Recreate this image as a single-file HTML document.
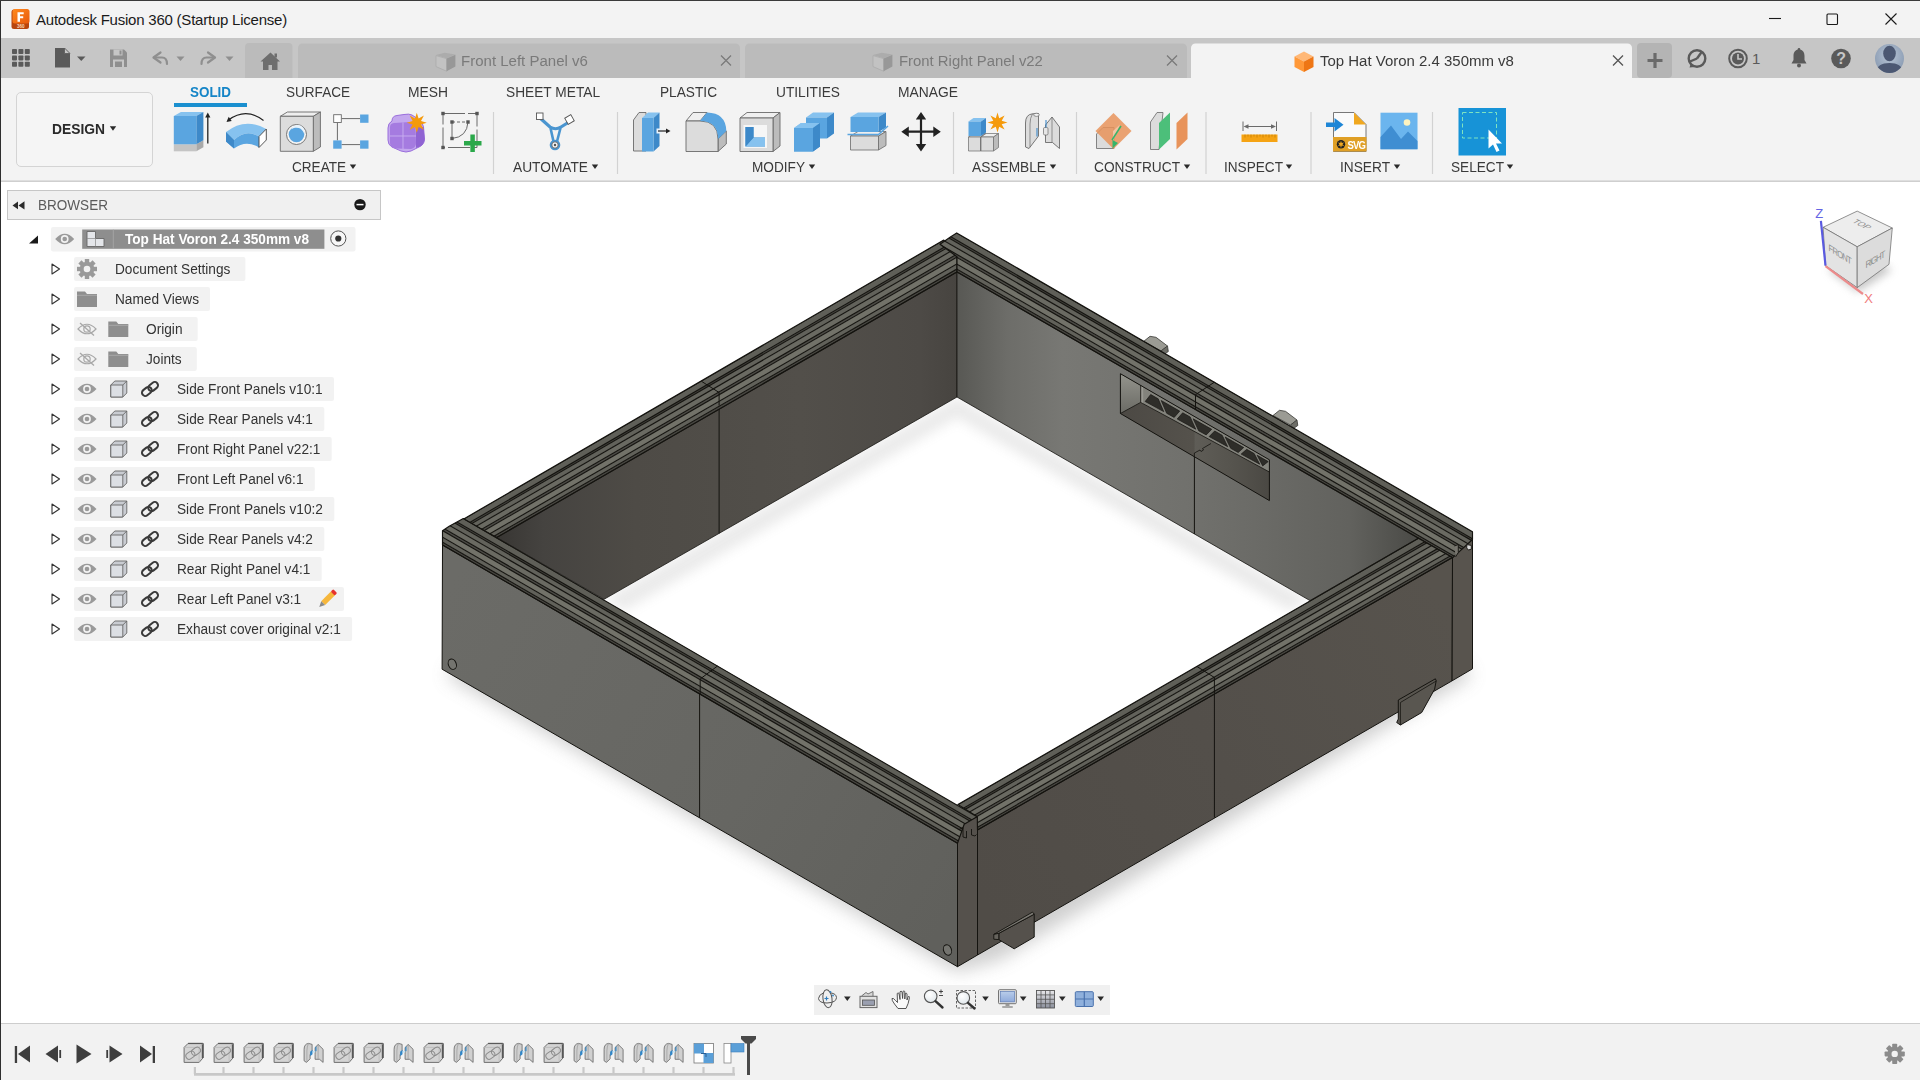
<!DOCTYPE html>
<html lang="en"><head><meta charset="utf-8"><title>Autodesk Fusion 360</title>
<style>
html,body{margin:0;padding:0;}
body{width:1920px;height:1080px;overflow:hidden;background:#fff;position:relative;
 font-family:"Liberation Sans",sans-serif;}
.a{position:absolute;}
.t{position:absolute;white-space:nowrap;font-family:"Liberation Sans",sans-serif;}
svg{position:absolute;overflow:visible;}
</style></head><body>
<div class="a" style="left:0;top:0;width:1920px;height:38px;background:#f3f3f3"></div>
<svg style="left:11px;top:9px" width="19" height="21" viewBox="0 0 19 21">
<defs><linearGradient id="fg" x1="0" y1="0" x2="1" y2="1"><stop offset="0" stop-color="#ff8a1f"/><stop offset="1" stop-color="#e8590c"/></linearGradient></defs>
<rect x="0.5" y="0.5" width="17.5" height="19.5" rx="2.5" fill="#b8450e"/>
<rect x="1.5" y="0" width="17" height="14.5" rx="2.5" fill="url(#fg)"/>
<path d="M6.5 3.2h6.2v2.1H9v2h3.2v2H9v3.4H6.5z" fill="#fff"/>
<text x="9.8" y="18.6" font-size="4.5" font-weight="bold" fill="#ffd9b8" text-anchor="middle" font-family="Liberation Sans, sans-serif">360</text>
</svg>
<span class="t" style="left:36px;top:9.0px;font-size:15.00px;line-height:21px;color:#1a1a1a;letter-spacing:-0.225px;">Autodesk Fusion 360 (Startup License)</span>
<svg style="left:1760px;top:8px" width="150" height="24" viewBox="1760 8 150 24">
<path d="M1769 18.5h12" stroke="#1a1a1a" stroke-width="1.1" fill="none"/>
<rect x="1827" y="14" width="10.5" height="10.5" rx="1" stroke="#1a1a1a" stroke-width="1.1" fill="none"/>
<path d="M1885.5 13.5l11 11M1896.5 13.5l-11 11" stroke="#1a1a1a" stroke-width="1.1" fill="none"/>
</svg>
<div class="a" style="left:0;top:38px;width:1920px;height:40px;background:#c6c6c6"></div>
<svg style="left:0;top:38px" width="300" height="40" viewBox="0 38 300 40"><rect x="12.0" y="49.0" width="5" height="5" rx="0.8" fill="#5a5a5a"/><rect x="18.4" y="49.0" width="5" height="5" rx="0.8" fill="#5a5a5a"/><rect x="24.8" y="49.0" width="5" height="5" rx="0.8" fill="#5a5a5a"/><rect x="12.0" y="55.4" width="5" height="5" rx="0.8" fill="#5a5a5a"/><rect x="18.4" y="55.4" width="5" height="5" rx="0.8" fill="#5a5a5a"/><rect x="24.8" y="55.4" width="5" height="5" rx="0.8" fill="#5a5a5a"/><rect x="12.0" y="61.8" width="5" height="5" rx="0.8" fill="#5a5a5a"/><rect x="18.4" y="61.8" width="5" height="5" rx="0.8" fill="#5a5a5a"/><rect x="24.8" y="61.8" width="5" height="5" rx="0.8" fill="#5a5a5a"/><path d="M55 48h9.5l5.5 5.5V67.5H55z" fill="#5a5a5a"/><path d="M64.5 48v5.5H70z" fill="#c6c6c6" stroke="#5a5a5a" stroke-width="0.8"/>
<path d="M77 56.5h8.5l-4.25 4.5z" fill="#5a5a5a"/>
<path d="M110 49.5h14l3 3V67h-17z" fill="#8f8f8f"/><rect x="113.5" y="49.5" width="9" height="6" fill="#c6c6c6"/><rect x="119.5" y="50.5" width="2" height="4" fill="#8f8f8f"/><rect x="113" y="59.5" width="11" height="7.5" fill="#c6c6c6"/><rect x="115" y="61.5" width="7" height="5.5" fill="#8f8f8f"/>
<path d="M160.500 52.500L153.500 57.500L160.500 62.500" fill="none" stroke="#8f8f8f" stroke-width="2.2" stroke-linejoin="round" stroke-linecap="round"/><path d="M154.500 57.500H162Q167 57.500 167 64" fill="none" stroke="#8f8f8f" stroke-width="2.2" stroke-linecap="round"/>
<path d="M176.500 56.500h8l-4 4.500z" fill="#8f8f8f"/>
<path d="M208 52.500L215 57.500L208 62.500" fill="none" stroke="#8f8f8f" stroke-width="2.2" stroke-linejoin="round" stroke-linecap="round"/><path d="M214 57.500H206.500Q201.500 57.500 201.500 64" fill="none" stroke="#8f8f8f" stroke-width="2.2" stroke-linecap="round"/>
<path d="M225.500 56.500h8l-4 4.500z" fill="#8f8f8f"/>
<path d="M245 78V47a4 4 0 0 1 4-4h39.500a4 4 0 0 1 4 4V78z" fill="#bbbbbb"/>
<path d="M270.500 52.500L280 61.500h-2.500V70h-5.500v-5h-3.500v5H263V61.500h-2.500z" fill="#6e6e6e"/><rect x="274.500" y="53.500" width="2.500" height="4" fill="#6e6e6e"/>
</svg>
<svg style="left:0;top:38px" width="1920" height="40" viewBox="0 38 1920 40"><path d="M298 78V48a4.500 4.500 0 0 1 4.500-4.500H735.5a4.500 4.500 0 0 1 4.500 4.500V78z" fill="#bbbbbb"/><path d="M745 78V48a4.500 4.500 0 0 1 4.500-4.500H1182.5a4.500 4.500 0 0 1 4.500 4.500V78z" fill="#bbbbbb"/><path d="M1191 78V48a4.500 4.500 0 0 1 4.500-4.500H1627.5a4.500 4.500 0 0 1 4.500 4.500V78z" fill="#f3f3f3"/><path d="M436 55L444.8 52.7L455.4 54.5L446.6 58.3z" fill="#acacac"/><path d="M436 55.6L446.6 58.6V71.2L436 66.6z" fill="#c2c2c2" stroke="#a4a4a4" stroke-width="0.600"/><path d="M455.4 54.8L446.6 58.6V71.2L455.4 66.6z" fill="#989898"/><path d="M721 55.5l10 10M731 55.5l-10 10" stroke="#7a7a7a" stroke-width="1.3" fill="none"/><path d="M873 55L881.8 52.7L892.4 54.5L883.6 58.3z" fill="#acacac"/><path d="M873 55.6L883.6 58.6V71.2L873 66.6z" fill="#c2c2c2" stroke="#a4a4a4" stroke-width="0.600"/><path d="M892.4 54.8L883.6 58.6V71.2L892.4 66.6z" fill="#989898"/><path d="M1167 55.5l10 10M1177 55.5l-10 10" stroke="#7a7a7a" stroke-width="1.3" fill="none"/><path d="M1294.5 56.5L1304.0 51.5L1313.5 56.5L1304.0 61.5z" fill="#ffb877"/><path d="M1294.5 56.5L1304.0 61.5V72.0L1294.5 67.0z" fill="#ff9838"/><path d="M1313.5 56.5L1304.0 61.5V72.0L1313.5 67.0z" fill="#ee7615"/><path d="M1613 55.5l10 10M1623 55.5l-10 10" stroke="#555" stroke-width="1.3" fill="none"/><rect x="1637" y="43" width="35" height="35" rx="4" fill="#b4b4b4"/><path d="M1655 53v15M1647.500 60.500h15" stroke="#6a6a6a" stroke-width="3.2" fill="none"/><circle cx="1697" cy="58.500" r="8.300" fill="none" stroke="#5a5a5a" stroke-width="2.400"/><path d="M1697 58.500L1702 51.500M1697 58.500l-7 3" stroke="#5a5a5a" stroke-width="2.400" fill="none"/><path d="M1691 63l-1.500 4.500 5.500-0.500z" fill="#5a5a5a"/><circle cx="1738" cy="58.500" r="8.800" fill="none" stroke="#5a5a5a" stroke-width="2"/><circle cx="1738" cy="58.500" r="6" fill="#5a5a5a"/><path d="M1738 54v5h4" stroke="#c6c6c6" stroke-width="1.600" fill="none"/><path d="M1799 49.500c-4 0-5.500 3.200-5.500 6.500v4l-2 3.500h15l-2-3.500v-4c0-3.300-1.500-6.500-5.500-6.500z" fill="#5a5a5a"/><circle cx="1799" cy="65.500" r="2" fill="#5a5a5a"/><circle cx="1799" cy="49.200" r="1.300" fill="#5a5a5a"/><circle cx="1841" cy="58.500" r="9.800" fill="#5a5a5a"/><defs><radialGradient id="av" cx="0.5" cy="0.4" r="0.6"><stop offset="0" stop-color="#b9c6d6"/><stop offset="1" stop-color="#8a9bb2"/></radialGradient><clipPath id="avc"><circle cx="1889.500" cy="58.500" r="14.500"/></clipPath></defs><circle cx="1889.500" cy="58.500" r="14.500" fill="url(#av)"/><g clip-path="url(#avc)"><ellipse cx="1889.500" cy="53.500" rx="6.300" ry="7.800" fill="#4c5872"/><path d="M1875 76c0-9.500 6-13 14.500-13s14.500 3.500 14.500 13z" fill="#4c5872"/></g></svg>
<span class="t" style="left:461px;top:50.0px;font-size:15.45px;line-height:22px;color:#7a7a7a;transform:scaleX(0.9729);transform-origin:0 50%;">Front Left Panel v6</span>
<span class="t" style="left:899px;top:50.0px;font-size:15.45px;line-height:22px;color:#7a7a7a;transform:scaleX(0.9637);transform-origin:0 50%;">Front Right Panel v22</span>
<span class="t" style="left:1320px;top:50.0px;font-size:15.45px;line-height:22px;color:#3a3a3a;transform:scaleX(0.9696);transform-origin:0 50%;">Top Hat Voron 2.4 350mm v8</span>
<span class="t" style="left:1752px;top:47.5px;font-size:15.00px;line-height:21px;color:#5a5a5a;">1</span>
<span class="t" style="left:1836.2px;top:47.5px;font-size:16.00px;line-height:22px;color:#c6c6c6;font-weight:bold;">?</span>
<div class="a" style="left:0;top:0;width:1920px;height:1px;background:#3a3a3a"></div>
<div class="a" style="left:0;top:78px;width:1920px;height:104px;background:#f3f3f3"></div>
<div class="a" style="left:0;top:180px;width:1920px;height:2px;background:#dedede"></div>
<div class="a" style="left:0;top:181px;width:1920px;height:1px;background:#cfcfcf"></div>
<div class="a" style="left:16px;top:92px;width:135px;height:73px;border:1px solid #d4d4d4;border-radius:5px;background:#f5f5f5"></div>
<span class="t" style="left:52px;top:118.5px;font-size:14.58px;line-height:20px;color:#2a2a2a;font-weight:bold;transform:scaleX(0.9482);transform-origin:0 50%;">DESIGN</span>
<span class="t" style="left:190px;top:82.0px;font-size:14.58px;line-height:20px;color:#1585c7;font-weight:bold;transform:scaleX(0.9203);transform-origin:0 50%;">SOLID</span>
<div class="a" style="left:174px;top:103px;width:73px;height:4px;background:#1a8fcf"></div>
<span class="t" style="left:286px;top:81.5px;font-size:14.72px;line-height:21px;color:#3a3a3a;transform:scaleX(0.9209);transform-origin:0 50%;">SURFACE</span>
<span class="t" style="left:408px;top:81.5px;font-size:14.72px;line-height:21px;color:#3a3a3a;transform:scaleX(0.9409);transform-origin:0 50%;">MESH</span>
<span class="t" style="left:506px;top:81.5px;font-size:14.72px;line-height:21px;color:#3a3a3a;transform:scaleX(0.9321);transform-origin:0 50%;">SHEET METAL</span>
<span class="t" style="left:660px;top:81.5px;font-size:14.72px;line-height:21px;color:#3a3a3a;transform:scaleX(0.9294);transform-origin:0 50%;">PLASTIC</span>
<span class="t" style="left:776px;top:81.5px;font-size:14.72px;line-height:21px;color:#3a3a3a;transform:scaleX(0.9318);transform-origin:0 50%;">UTILITIES</span>
<span class="t" style="left:898px;top:81.5px;font-size:14.72px;line-height:21px;color:#3a3a3a;transform:scaleX(0.9408);transform-origin:0 50%;">MANAGE</span>
<span class="t" style="left:292px;top:156.5px;font-size:14.72px;line-height:21px;color:#3a3a3a;transform:scaleX(0.9216);transform-origin:0 50%;">CREATE</span>
<span class="t" style="left:513px;top:156.5px;font-size:14.72px;line-height:21px;color:#3a3a3a;transform:scaleX(0.9329);transform-origin:0 50%;">AUTOMATE</span>
<span class="t" style="left:752px;top:156.5px;font-size:14.72px;line-height:21px;color:#3a3a3a;transform:scaleX(0.9262);transform-origin:0 50%;">MODIFY</span>
<span class="t" style="left:972px;top:156.5px;font-size:14.72px;line-height:21px;color:#3a3a3a;transform:scaleX(0.9328);transform-origin:0 50%;">ASSEMBLE</span>
<span class="t" style="left:1094px;top:156.5px;font-size:14.72px;line-height:21px;color:#3a3a3a;transform:scaleX(0.9310);transform-origin:0 50%;">CONSTRUCT</span>
<span class="t" style="left:1224px;top:156.5px;font-size:14.72px;line-height:21px;color:#3a3a3a;transform:scaleX(0.9251);transform-origin:0 50%;">INSPECT</span>
<span class="t" style="left:1340px;top:156.5px;font-size:14.72px;line-height:21px;color:#3a3a3a;transform:scaleX(0.9312);transform-origin:0 50%;">INSERT</span>
<span class="t" style="left:1451px;top:156.5px;font-size:14.72px;line-height:21px;color:#3a3a3a;transform:scaleX(0.9259);transform-origin:0 50%;">SELECT</span>
<svg style="left:0;top:78px" width="1920" height="104" viewBox="0 78 1920 104"><path d="M349.8 164.500h6.400l-3.200 4.500z" fill="#2a2a2a"/><path d="M591.8 164.500h6.400l-3.200 4.500z" fill="#2a2a2a"/><path d="M808.8 164.500h6.400l-3.200 4.500z" fill="#2a2a2a"/><path d="M1049.8 164.500h6.400l-3.200 4.500z" fill="#2a2a2a"/><path d="M1183.8 164.500h6.400l-3.200 4.500z" fill="#2a2a2a"/><path d="M1285.8 164.500h6.400l-3.200 4.500z" fill="#2a2a2a"/><path d="M1393.8 164.500h6.400l-3.200 4.500z" fill="#2a2a2a"/><path d="M1506.8 164.500h6.400l-3.200 4.500z" fill="#2a2a2a"/><path d="M109.800 126.300h6.400l-3.200 4.500z" fill="#2a2a2a"/><path d="M493.5 112V174" stroke="#d2d2d2" stroke-width="1.2"/><path d="M617.5 112V174" stroke="#d2d2d2" stroke-width="1.2"/><path d="M953.5 112V174" stroke="#d2d2d2" stroke-width="1.2"/><path d="M1076.5 112V174" stroke="#d2d2d2" stroke-width="1.2"/><path d="M1206 112V174" stroke="#d2d2d2" stroke-width="1.2"/><path d="M1311 112V174" stroke="#d2d2d2" stroke-width="1.2"/><path d="M1432.5 112V174" stroke="#d2d2d2" stroke-width="1.2"/><polygon points="173.8,144.3 180.9,140.3 203.4,140.3 196.3,144.3" fill="#ddd"/><polygon points="196.3,144.3 203.4,140.3 203.4,147.3 196.3,151.3" fill="#a9a9a9"/><rect x="173.8" y="144.3" width="22.5" height="7" fill="#c4c4c4"/><polygon points="173.8,116 180.9,112 203.4,112 196.3,116" fill="#86c2ef"/><polygon points="196.3,116 203.4,112 203.4,140.3 196.3,144.3" fill="#3d89c9"/><rect x="173.8" y="116" width="22.5" height="28.3" fill="#5aa5e0"/><path d="M207.800 143.500V116" stroke="#222" stroke-width="1.3"/><path d="M207.800 112.500l2.600 5h-5.200z" fill="#222"/><path d="M226 132Q245 117 266.300 129L259 136.500Q246 128.500 234 140Z" fill="#86c2ef"/><path d="M226 132L234 140Q246 128.500 259 136.500V147.500Q246 139.500 234 148.500L226 141.500Z" fill="#5aa5e0"/><path d="M226 132L234 140V148.500L226 141.500Z" fill="#3d89c9"/><path d="M259 136.500L266.300 129V140L259 147.500Z" fill="#fff" stroke="#444" stroke-width="0.9" stroke-linejoin="round"/><path d="M263.500 120.500Q246 107 228.500 120" fill="none" stroke="#222" stroke-width="1.1"/><path d="M226.500 122l2.200-5.200 3 4.300z" fill="#222"/><polygon points="280.3,116.3 287.40000000000003,112.0 320.40000000000003,112.0 313.3,116.3" fill="#efefef" stroke="#6a6a6a" stroke-width="0.9" stroke-linejoin="round"/><polygon points="313.3,116.3 320.40000000000003,112.0 320.40000000000003,147.0 313.3,151.3" fill="#bcbcbc" stroke="#6a6a6a" stroke-width="0.9" stroke-linejoin="round"/><rect x="280.3" y="116.3" width="33" height="35" fill="#dcdcdc" stroke="#6a6a6a" stroke-width="0.9" stroke-linejoin="round"/><circle cx="296.500" cy="134.500" r="10" fill="#f4f4f4" stroke="#6a6a6a" stroke-width="0.9"/><circle cx="296.500" cy="134.500" r="7.800" fill="#5aa5e0"/><path d="M291.500 129.500A7.800 7.800 0 0 1 304 133.500A6.500 6.500 0 0 0 291.500 129.500Z" fill="#e8f3fc"/><path d="M341.500 118.600H360M337.400 122.700V140.400M341.500 144.600H360" stroke="#6a6a6a" stroke-width="1" fill="none"/><rect x="333.700" y="114.700" width="7.600" height="7.800" fill="#fff" stroke="#6a6a6a" stroke-width="0.9"/><rect x="360.100" y="114.500" width="8.400" height="8.300" fill="#5aa5e0"/><rect x="333.200" y="140.400" width="8.400" height="8.300" fill="#5aa5e0"/><rect x="360.100" y="140.400" width="8.400" height="8.300" fill="#5aa5e0"/><path d="M392 121Q392 116 397 115.500L404 114.500Q409 113.500 412 115L418 119Q423 122 423.500 127L424.500 139Q424.500 144 420 146.500L411 151Q406 153 401 151L392 147Q388 145 388 140L388 128Q388 123 392 121Z" fill="#c4a8ee" stroke="#9a6fdc" stroke-width="1"/><path d="M390 127Q390 123.500 394 123L410 122Q415 122 415.500 127L416 143Q416 148 411 149L396 148.500Q390 148 390 143Z" fill="#a57be0"/><path d="M390 136H416M403 122.500V149" stroke="#c9b0f0" stroke-width="0.9"/><path d="M416 127L423.500 127L424.500 139Q424.500 144 420 146.500L416 148Z" fill="#8f63d2"/><polygon points="416.8,112.7 418.6,118.5 423.9,115.6 421.0,120.9 426.8,122.7 421.0,124.5 423.9,129.8 418.6,126.9 416.8,132.7 415.0,126.9 409.7,129.8 412.6,124.5 406.8,122.7 412.6,120.9 409.7,115.6 415.0,118.5" fill="#f59a0c"/><rect x="443" y="113.500" width="34" height="34" fill="none" stroke="#6a6a6a" stroke-width="1" stroke-dasharray="22 3"/><path d="M452 122H468" stroke="#6a6a6a" stroke-width="1" stroke-dasharray="3 2" fill="none"/><path d="M452 122V138.500" stroke="#6a6a6a" stroke-width="1" fill="none"/><path d="M468 122Q467 137 452 138.500" stroke="#6a6a6a" stroke-width="1" fill="none"/><rect x="441.3" y="111.8" width="3.400" height="3.400" fill="#555"/><rect x="475.3" y="111.8" width="3.400" height="3.400" fill="#555"/><rect x="441.3" y="145.8" width="3.400" height="3.400" fill="#555"/><rect x="450.3" y="120.3" width="3.400" height="3.400" fill="#555"/><rect x="466.3" y="120.3" width="3.400" height="3.400" fill="#555"/><rect x="450.3" y="136.8" width="3.400" height="3.400" fill="#555"/><path d="M472.600 134.500V152M464 143.200H481.500" stroke="#2ba84a" stroke-width="4.500" fill="none"/><path d="M540 118L550 127Q555.500 130.500 561 127L569 122" fill="none" stroke="#4a95d0" stroke-width="3.200"/><path d="M550.500 128L553.500 141.500M560.500 128L557 141.500" fill="none" stroke="#4a95d0" stroke-width="2.600"/><circle cx="555" cy="145" r="5.300" fill="#4a95d0"/><circle cx="555" cy="145" r="3.200" fill="#f3f3f3" stroke="#555" stroke-width="0.8"/><circle cx="555" cy="145" r="1.200" fill="#555"/><rect x="536.500" y="113" width="6.500" height="6.500" fill="#fff" stroke="#555" stroke-width="0.9"/><rect x="566" y="116" width="7" height="7" fill="#fff" stroke="#555" stroke-width="0.9" transform="rotate(-30 569.5 119.5)"/><path d="M633.500 120L639 112.500H646V151H633.500Z" fill="#dcdcdc" stroke="#6a6a6a" stroke-width="0.9" stroke-linejoin="round"/><polygon points="642,118 648,112.5 659.5,112.5 653.5,118" fill="#86c2ef"/><polygon points="653.5,118 659.5,112.5 659.5,146.0 653.5,151.5" fill="#3d89c9"/><rect x="642" y="118" width="11.5" height="33.5" fill="#5aa5e0"/><rect x="656.500" y="128.500" width="5" height="5" fill="#eaf3fb"/><path d="M658 131H668" stroke="#222" stroke-width="1.2"/><path d="M670.500 131l-4.500-2.500v5z" fill="#222"/><path d="M686 121L693 112.500H707L700 121Z" fill="#efefef" stroke="#6a6a6a" stroke-width="0.9" stroke-linejoin="round"/><path d="M718 139L726.300 131V144L718 151.500Z" fill="#bcbcbc" stroke="#6a6a6a" stroke-width="0.9" stroke-linejoin="round"/><path d="M686 121H700Q718 121 718 139V151.500H686Z" fill="#dcdcdc" stroke="#6a6a6a" stroke-width="0.9" stroke-linejoin="round"/><path d="M700 121L707 112.500Q726 113 726.300 131L718 139Q718 121 700 121Z" fill="#5aa5e0"/><polygon points="740,118 747,112.5 780,112.5 773,118" fill="#efefef" stroke="#6a6a6a" stroke-width="0.9" stroke-linejoin="round"/><polygon points="773,118 780,112.5 780,146.0 773,151.5" fill="#bcbcbc" stroke="#6a6a6a" stroke-width="0.9" stroke-linejoin="round"/><rect x="740" y="118" width="33" height="33.5" fill="#dcdcdc" stroke="#6a6a6a" stroke-width="0.9" stroke-linejoin="round"/><rect x="743.500" y="125" width="23.500" height="23" fill="#f6f6f6"/><path d="M745.500 127H753.500V137.500H765V146.500H745.500Z" fill="#3d89c9"/><path d="M753.500 137.500H765V146.500H745.500Z" fill="#86c2ef"/><path d="M745.500 127H753.500V137.500L745.500 146.500Z" fill="#3d89c9"/><polygon points="794,128 801,123 820,123 813,128" fill="#86c2ef"/><polygon points="813,128 820,123 820,146.5 813,151.5" fill="#3d89c9"/><rect x="794" y="128" width="19" height="23.5" fill="#5aa5e0"/><polygon points="806,117.5 813,112.5 834,112.5 827,117.5" fill="#86c2ef"/><polygon points="827,117.5 834,112.5 834,133.5 827,138.5" fill="#3d89c9"/><rect x="806" y="117.5" width="21" height="21" fill="#5aa5e0"/><polygon points="794,128 801,123 820,123 813,128" fill="#86c2ef"/><polygon points="813,128 820,123 820,146.5 813,151.5" fill="#3d89c9"/><rect x="794" y="128" width="19" height="23.5" fill="#5aa5e0"/><polygon points="850.5,136 858.0,131.5 886.0,131.5 878.5,136" fill="#efefef" stroke="#6a6a6a" stroke-width="0.8" stroke-linejoin="round"/><polygon points="878.5,136 886.0,131.5 886.0,145.5 878.5,150" fill="#bcbcbc" stroke="#6a6a6a" stroke-width="0.8" stroke-linejoin="round"/><rect x="850.5" y="136" width="28" height="14" fill="#dcdcdc" stroke="#6a6a6a" stroke-width="0.8" stroke-linejoin="round"/><polygon points="850.5,117 858.0,112.5 886.0,112.5 878.5,117" fill="#86c2ef"/><polygon points="878.5,117 886.0,112.5 886.0,127.5 878.5,132" fill="#3d89c9"/><rect x="850.5" y="117" width="28" height="15" fill="#5aa5e0"/><path d="M847.500 134.500H878.500L888 126" fill="none" stroke="#5aa5e0" stroke-width="1.600"/><path d="M921 116V147.500M905.500 131.700H936.500" stroke="#222" stroke-width="2.200" fill="none"/><path d="M921 112l5.200 7.500h-10.400zM921 151.500l5.200-7.500h-10.400zM901.300 131.700l7.500-5.200v10.400zM940.800 131.700l-7.500-5.200v10.400z" fill="#222"/><polygon points="968.5,137 973.5,133.5 985.5,133.5 980.5,137" fill="#efefef" stroke="#6a6a6a" stroke-width="0.7" stroke-linejoin="round"/><polygon points="980.5,137 985.5,133.5 985.5,147.5 980.5,151" fill="#bcbcbc" stroke="#6a6a6a" stroke-width="0.7" stroke-linejoin="round"/><rect x="968.5" y="137" width="12" height="14" fill="#dcdcdc" stroke="#6a6a6a" stroke-width="0.7" stroke-linejoin="round"/><polygon points="981,137 986,133.5 998.5,133.5 993.5,137" fill="#efefef" stroke="#6a6a6a" stroke-width="0.7" stroke-linejoin="round"/><polygon points="993.5,137 998.5,133.5 998.5,147.5 993.5,151" fill="#bcbcbc" stroke="#6a6a6a" stroke-width="0.7" stroke-linejoin="round"/><rect x="981" y="137" width="12.5" height="14" fill="#dcdcdc" stroke="#6a6a6a" stroke-width="0.7" stroke-linejoin="round"/><polygon points="968.5,121.5 973.5,118.0 986.0,118.0 981.0,121.5" fill="#86c2ef"/><polygon points="981.0,121.5 986.0,118.0 986.0,132.5 981.0,136.0" fill="#3d89c9"/><rect x="968.5" y="121.5" width="12.5" height="14.5" fill="#5aa5e0"/><polygon points="997.5,112.5 999.2,118.3 1004.6,115.4 1001.7,120.8 1007.5,122.5 1001.7,124.2 1004.6,129.6 999.2,126.7 997.5,132.5 995.8,126.7 990.4,129.6 993.3,124.2 987.5,122.5 993.3,120.8 990.4,115.4 995.8,118.3" fill="#f59a0c"/><path d="M1025.500 147V123Q1025.500 114.500 1032.500 113.800L1038.500 113.500V136L1029 148.500Z" fill="#dcdcdc" stroke="#6a6a6a" stroke-width="0.9" stroke-linejoin="round"/><path d="M1032.500 113.800Q1030 118 1030 124V147" fill="none" stroke="#6a6a6a" stroke-width="0.7"/><path d="M1045.500 142.500V125L1052 117L1059.500 127V148.500L1052.500 142.500Z" fill="#dcdcdc" stroke="#6a6a6a" stroke-width="0.9" stroke-linejoin="round"/><path d="M1052 117V142.500" stroke="#6a6a6a" stroke-width="0.7"/><rect x="1043.500" y="127.500" width="4.500" height="7.500" rx="1.200" fill="#e6e6e6" stroke="#6a6a6a" stroke-width="0.7"/><ellipse cx="1036.500" cy="114.800" rx="2.800" ry="1.600" fill="#f2f2f2" stroke="#6a6a6a" stroke-width="0.7"/><path d="M1037 128V136.500M1046 120V127.500" stroke="#3d89c9" stroke-width="1.100"/><path d="M1096.500 134L1103 127.500H1114V148.500H1096.500Z" fill="#dcdcdc" stroke="#6a6a6a" stroke-width="0.8" stroke-linejoin="round"/><path d="M1113.500 113L1131.500 131L1113.500 149L1095.500 131Z" fill="#e8935a" fill-opacity="0.85"/><path d="M1113 141L1120 124.500L1113 131Z" fill="#f2c3a2"/><path d="M1112.500 140V148.500L1118 143Z" fill="#35b56a"/><path d="M1112 140L1121 126" stroke="#35b56a" stroke-width="1.500"/><path d="M1150.500 122L1157 112.500H1163L1159 149.500H1150.500Z" fill="#dcdcdc" stroke="#6a6a6a" stroke-width="0.8" stroke-linejoin="round"/><path d="M1159 123L1170 112.500V139L1159 149.500Z" fill="#4cbf7a"/><path d="M1176.500 123L1187.500 112.500V139L1176.500 149.500Z" fill="#e8935a"/><path d="M1243 121.500V131M1276.500 121.500V131M1245 126.500H1274.500" stroke="#6a6a6a" stroke-width="1" fill="none"/><path d="M1243.500 126.500l5-2.300v4.600zM1276 126.500l-5-2.300v4.600z" fill="#6a6a6a"/><rect x="1241.500" y="134.500" width="36" height="7.500" fill="#f5a313"/><path d="M1245 134.500v3M1248 134.500v2M1251 134.500v3M1254 134.500v2M1257 134.500v3M1260 134.500v2M1263 134.500v3M1266 134.500v2M1269 134.500v3M1272 134.500v2M1275 134.500v3" stroke="#c27a00" stroke-width="0.7"/><path d="M1333.500 112.500H1354L1366 124.500V151.500H1333.500Z" fill="#fafafa" stroke="#6a6a6a" stroke-width="0.9"/><path d="M1354 112.500L1366 124.500H1354Z" fill="#f0a820"/><rect x="1333" y="137" width="33.500" height="14.500" fill="#e0a026"/><circle cx="1341" cy="144.300" r="4.200" fill="#222"/><polygon points="1341.0,140.7 1341.8,143.0 1344.1,142.5 1342.5,144.3 1344.1,146.1 1341.8,145.6 1341.0,147.9 1340.2,145.6 1337.9,146.1 1339.5,144.3 1337.9,142.5 1340.2,143.0" fill="#f0a820"/><rect x="1326" y="122.500" width="10" height="4.500" fill="#1e86d6"/><path d="M1334.500 118l9 6.700-9 6.700z" fill="#1e86d6"/><rect x="1380.500" y="112.700" width="37" height="36.500" fill="#6bb5ee"/><path d="M1380.500 149.200V137L1391 125.500L1401 139L1408 131.500L1417.500 141V149.200Z" fill="#3f8ed2"/><circle cx="1407" cy="122.500" r="3.300" fill="#fdf3c0"/><rect x="1458.500" y="108" width="47.500" height="47.500" fill="#1793d7"/><rect x="1462.500" y="112.500" width="34" height="25.500" fill="none" stroke="#7fe3c0" stroke-width="1" stroke-dasharray="4 2.500"/><path d="M1488.500 129.500V148.500L1493 144.500L1496.500 152L1499.500 150.500L1496 143.500H1502Z" fill="#fff"/></svg>
<span class="t" style="left:1347.5px;top:138.0px;font-size:9.50px;line-height:13px;color:#fff;font-weight:bold;letter-spacing:-0.854px;transform:scaleY(1.15);">SVG</span>
<div class="a" style="left:0;top:1px;width:1px;height:1079px;background:#2e2e2e;z-index:5"></div>
<div class="a" style="left:6.500px;top:189.500px;width:372px;height:28px;background:#f0f0f0;border:1px solid #c6c6c6;box-sizing:content-box"></div>
<span class="t" style="left:37.5px;top:194.5px;font-size:14.45px;line-height:20px;color:#5a5a5a;transform:scaleX(0.9378);transform-origin:0 50%;">BROWSER</span>
<svg style="left:0;top:182px" width="400" height="470" viewBox="0 182 400 470"><path d="M12.500 205.400l5.500-3.800v7.600zM18.500 205.400l6-4.200v8.400z" fill="#2a2a2a"/><circle cx="360" cy="204.600" r="5.700" fill="#1a1a1a"/><path d="M356.500 204.600h7" stroke="#fff" stroke-width="1.500"/><rect x="51" y="227" width="304.500" height="24.500" rx="2" fill="#f2f2f2"/><path d="M38 235.500V243.500H29Z" fill="#1a1a1a"/><path d="M55.2 239Q64.7 228.5 74.2 239Q64.7 249.5 55.2 239Z" fill="#9a9a9a"/><circle cx="64.7" cy="239" r="3.900" fill="#f2f2f2"/><circle cx="64.7" cy="239" r="2.300" fill="#9a9a9a"/><rect x="82.200" y="229.500" width="242.200" height="19.300" fill="#8e8e8e"/><path d="M113.300 229.500V248.800" stroke="#a8a8a8" stroke-width="0.800"/><path d="M87 231.500H95.500V238.500H104V246.500H87Z" fill="#e4e6ea" stroke="#666" stroke-width="0.900" stroke-linejoin="round"/><path d="M95.500 238.500V246.500M87 238.500H95.500" stroke="#888" stroke-width="0.700"/><circle cx="338.300" cy="238.500" r="7.600" fill="#f7f7f7" stroke="#555" stroke-width="1"/><circle cx="338.300" cy="238.500" r="3.100" fill="#333"/><rect x="74" y="257" width="171.4" height="24" rx="2" fill="#f2f2f2"/><path d="M52 264L59.5 269L52 274Z" fill="#fff" stroke="#333" stroke-width="1.100" stroke-linejoin="round"/><rect x="84.8" y="259" width="4.400" height="20" fill="#9a9a9a" transform="rotate(0 87 269)"/><rect x="84.8" y="259" width="4.400" height="20" fill="#9a9a9a" transform="rotate(45 87 269)"/><rect x="84.8" y="259" width="4.400" height="20" fill="#9a9a9a" transform="rotate(90 87 269)"/><rect x="84.8" y="259" width="4.400" height="20" fill="#9a9a9a" transform="rotate(135 87 269)"/><circle cx="87" cy="269" r="7.300" fill="#9a9a9a"/><circle cx="87" cy="269" r="3.300" fill="#f2f2f2"/><rect x="74" y="287" width="136.0" height="24" rx="2" fill="#f2f2f2"/><path d="M52 294L59.5 299L52 304Z" fill="#fff" stroke="#333" stroke-width="1.100" stroke-linejoin="round"/><path d="M77 291.5H85L87 294H97V307H77Z" fill="#8e8e8e"/><path d="M77 295.3H97" stroke="#b5b5b5" stroke-width="0.700"/><rect x="74" y="317" width="123.7" height="24" rx="2" fill="#f2f2f2"/><path d="M52 324L59.5 329L52 334Z" fill="#fff" stroke="#333" stroke-width="1.100" stroke-linejoin="round"/><path d="M78 329Q87 319.5 96 329Q87 338.5 78 329Z" fill="none" stroke="#a8a8a8" stroke-width="1.200"/><circle cx="87" cy="329" r="3.200" fill="none" stroke="#a8a8a8" stroke-width="1.200"/><path d="M80 323L94 335.5" stroke="#a8a8a8" stroke-width="1.300"/><path d="M108.3 321.5H116.3L118.3 324H128.3V337H108.3Z" fill="#8e8e8e"/><path d="M108.3 325.3H128.3" stroke="#b5b5b5" stroke-width="0.700"/><rect x="74" y="347" width="122.8" height="24" rx="2" fill="#f2f2f2"/><path d="M52 354L59.5 359L52 364Z" fill="#fff" stroke="#333" stroke-width="1.100" stroke-linejoin="round"/><path d="M78 359Q87 349.5 96 359Q87 368.5 78 359Z" fill="none" stroke="#a8a8a8" stroke-width="1.200"/><circle cx="87" cy="359" r="3.200" fill="none" stroke="#a8a8a8" stroke-width="1.200"/><path d="M80 353L94 365.5" stroke="#a8a8a8" stroke-width="1.300"/><path d="M108.3 351.5H116.3L118.3 354H128.3V367H108.3Z" fill="#8e8e8e"/><path d="M108.3 355.3H128.3" stroke="#b5b5b5" stroke-width="0.700"/><rect x="74" y="377" width="260.0" height="24" rx="2" fill="#f2f2f2"/><path d="M52 384L59.5 389L52 394Z" fill="#fff" stroke="#333" stroke-width="1.100" stroke-linejoin="round"/><path d="M77.5 389Q87 378.5 96.5 389Q87 399.5 77.5 389Z" fill="#9a9a9a"/><circle cx="87" cy="389" r="3.900" fill="#f2f2f2"/><circle cx="87" cy="389" r="2.300" fill="#9a9a9a"/><path d="M110.8 385.0L114.8 381.0H126.8V393.0L122.8 397.0H110.8Z" fill="#c9ccd2" stroke="#666" stroke-width="0.900" stroke-linejoin="round"/><path d="M110.8 385.0H122.8V397.0H110.8Z" fill="#dcdfe4" stroke="#666" stroke-width="0.900" stroke-linejoin="round"/><path d="M122.8 385.0L126.8 381.0" stroke="#666" stroke-width="0.900"/><g transform="translate(150 389) rotate(-38)" fill="none" stroke="#3a3a3a" stroke-width="2"><rect x="-9.300" y="-3.300" width="10.600" height="6.600" rx="3.300"/><rect x="-1.300" y="-3.300" width="10.600" height="6.600" rx="3.300"/></g><rect x="74" y="407" width="250.3" height="24" rx="2" fill="#f2f2f2"/><path d="M52 414L59.5 419L52 424Z" fill="#fff" stroke="#333" stroke-width="1.100" stroke-linejoin="round"/><path d="M77.5 419Q87 408.5 96.5 419Q87 429.5 77.5 419Z" fill="#9a9a9a"/><circle cx="87" cy="419" r="3.900" fill="#f2f2f2"/><circle cx="87" cy="419" r="2.300" fill="#9a9a9a"/><path d="M110.8 415.0L114.8 411.0H126.8V423.0L122.8 427.0H110.8Z" fill="#c9ccd2" stroke="#666" stroke-width="0.900" stroke-linejoin="round"/><path d="M110.8 415.0H122.8V427.0H110.8Z" fill="#dcdfe4" stroke="#666" stroke-width="0.900" stroke-linejoin="round"/><path d="M122.8 415.0L126.8 411.0" stroke="#666" stroke-width="0.900"/><g transform="translate(150 419) rotate(-38)" fill="none" stroke="#3a3a3a" stroke-width="2"><rect x="-9.300" y="-3.300" width="10.600" height="6.600" rx="3.300"/><rect x="-1.300" y="-3.300" width="10.600" height="6.600" rx="3.300"/></g><rect x="74" y="437" width="257.7" height="24" rx="2" fill="#f2f2f2"/><path d="M52 444L59.5 449L52 454Z" fill="#fff" stroke="#333" stroke-width="1.100" stroke-linejoin="round"/><path d="M77.5 449Q87 438.5 96.5 449Q87 459.5 77.5 449Z" fill="#9a9a9a"/><circle cx="87" cy="449" r="3.900" fill="#f2f2f2"/><circle cx="87" cy="449" r="2.300" fill="#9a9a9a"/><path d="M110.8 445.0L114.8 441.0H126.8V453.0L122.8 457.0H110.8Z" fill="#c9ccd2" stroke="#666" stroke-width="0.900" stroke-linejoin="round"/><path d="M110.8 445.0H122.8V457.0H110.8Z" fill="#dcdfe4" stroke="#666" stroke-width="0.900" stroke-linejoin="round"/><path d="M122.8 445.0L126.8 441.0" stroke="#666" stroke-width="0.900"/><g transform="translate(150 449) rotate(-38)" fill="none" stroke="#3a3a3a" stroke-width="2"><rect x="-9.300" y="-3.300" width="10.600" height="6.600" rx="3.300"/><rect x="-1.300" y="-3.300" width="10.600" height="6.600" rx="3.300"/></g><rect x="74" y="467" width="240.8" height="24" rx="2" fill="#f2f2f2"/><path d="M52 474L59.5 479L52 484Z" fill="#fff" stroke="#333" stroke-width="1.100" stroke-linejoin="round"/><path d="M77.5 479Q87 468.5 96.5 479Q87 489.5 77.5 479Z" fill="#9a9a9a"/><circle cx="87" cy="479" r="3.900" fill="#f2f2f2"/><circle cx="87" cy="479" r="2.300" fill="#9a9a9a"/><path d="M110.8 475.0L114.8 471.0H126.8V483.0L122.8 487.0H110.8Z" fill="#c9ccd2" stroke="#666" stroke-width="0.900" stroke-linejoin="round"/><path d="M110.8 475.0H122.8V487.0H110.8Z" fill="#dcdfe4" stroke="#666" stroke-width="0.900" stroke-linejoin="round"/><path d="M122.8 475.0L126.8 471.0" stroke="#666" stroke-width="0.900"/><g transform="translate(150 479) rotate(-38)" fill="none" stroke="#3a3a3a" stroke-width="2"><rect x="-9.300" y="-3.300" width="10.600" height="6.600" rx="3.300"/><rect x="-1.300" y="-3.300" width="10.600" height="6.600" rx="3.300"/></g><rect x="74" y="497" width="260.3" height="24" rx="2" fill="#f2f2f2"/><path d="M52 504L59.5 509L52 514Z" fill="#fff" stroke="#333" stroke-width="1.100" stroke-linejoin="round"/><path d="M77.5 509Q87 498.5 96.5 509Q87 519.5 77.5 509Z" fill="#9a9a9a"/><circle cx="87" cy="509" r="3.900" fill="#f2f2f2"/><circle cx="87" cy="509" r="2.300" fill="#9a9a9a"/><path d="M110.8 505.0L114.8 501.0H126.8V513.0L122.8 517.0H110.8Z" fill="#c9ccd2" stroke="#666" stroke-width="0.900" stroke-linejoin="round"/><path d="M110.8 505.0H122.8V517.0H110.8Z" fill="#dcdfe4" stroke="#666" stroke-width="0.900" stroke-linejoin="round"/><path d="M122.8 505.0L126.8 501.0" stroke="#666" stroke-width="0.900"/><g transform="translate(150 509) rotate(-38)" fill="none" stroke="#3a3a3a" stroke-width="2"><rect x="-9.300" y="-3.300" width="10.600" height="6.600" rx="3.300"/><rect x="-1.300" y="-3.300" width="10.600" height="6.600" rx="3.300"/></g><rect x="74" y="527" width="250.3" height="24" rx="2" fill="#f2f2f2"/><path d="M52 534L59.5 539L52 544Z" fill="#fff" stroke="#333" stroke-width="1.100" stroke-linejoin="round"/><path d="M77.5 539Q87 528.5 96.5 539Q87 549.5 77.5 539Z" fill="#9a9a9a"/><circle cx="87" cy="539" r="3.900" fill="#f2f2f2"/><circle cx="87" cy="539" r="2.300" fill="#9a9a9a"/><path d="M110.8 535.0L114.8 531.0H126.8V543.0L122.8 547.0H110.8Z" fill="#c9ccd2" stroke="#666" stroke-width="0.900" stroke-linejoin="round"/><path d="M110.8 535.0H122.8V547.0H110.8Z" fill="#dcdfe4" stroke="#666" stroke-width="0.900" stroke-linejoin="round"/><path d="M122.8 535.0L126.8 531.0" stroke="#666" stroke-width="0.900"/><g transform="translate(150 539) rotate(-38)" fill="none" stroke="#3a3a3a" stroke-width="2"><rect x="-9.300" y="-3.300" width="10.600" height="6.600" rx="3.300"/><rect x="-1.300" y="-3.300" width="10.600" height="6.600" rx="3.300"/></g><rect x="74" y="557" width="247.7" height="24" rx="2" fill="#f2f2f2"/><path d="M52 564L59.5 569L52 574Z" fill="#fff" stroke="#333" stroke-width="1.100" stroke-linejoin="round"/><path d="M77.5 569Q87 558.5 96.5 569Q87 579.5 77.5 569Z" fill="#9a9a9a"/><circle cx="87" cy="569" r="3.900" fill="#f2f2f2"/><circle cx="87" cy="569" r="2.300" fill="#9a9a9a"/><path d="M110.8 565.0L114.8 561.0H126.8V573.0L122.8 577.0H110.8Z" fill="#c9ccd2" stroke="#666" stroke-width="0.900" stroke-linejoin="round"/><path d="M110.8 565.0H122.8V577.0H110.8Z" fill="#dcdfe4" stroke="#666" stroke-width="0.900" stroke-linejoin="round"/><path d="M122.8 565.0L126.8 561.0" stroke="#666" stroke-width="0.900"/><g transform="translate(150 569) rotate(-38)" fill="none" stroke="#3a3a3a" stroke-width="2"><rect x="-9.300" y="-3.300" width="10.600" height="6.600" rx="3.300"/><rect x="-1.300" y="-3.300" width="10.600" height="6.600" rx="3.300"/></g><rect x="74" y="587" width="270.0" height="24" rx="2" fill="#f2f2f2"/><path d="M52 594L59.5 599L52 604Z" fill="#fff" stroke="#333" stroke-width="1.100" stroke-linejoin="round"/><path d="M77.5 599Q87 588.5 96.5 599Q87 609.5 77.5 599Z" fill="#9a9a9a"/><circle cx="87" cy="599" r="3.900" fill="#f2f2f2"/><circle cx="87" cy="599" r="2.300" fill="#9a9a9a"/><path d="M110.8 595.0L114.8 591.0H126.8V603.0L122.8 607.0H110.8Z" fill="#c9ccd2" stroke="#666" stroke-width="0.900" stroke-linejoin="round"/><path d="M110.8 595.0H122.8V607.0H110.8Z" fill="#dcdfe4" stroke="#666" stroke-width="0.900" stroke-linejoin="round"/><path d="M122.8 595.0L126.8 591.0" stroke="#666" stroke-width="0.900"/><g transform="translate(150 599) rotate(-38)" fill="none" stroke="#3a3a3a" stroke-width="2"><rect x="-9.300" y="-3.300" width="10.600" height="6.600" rx="3.300"/><rect x="-1.300" y="-3.300" width="10.600" height="6.600" rx="3.300"/></g><rect x="74" y="617" width="278.1" height="24" rx="2" fill="#f2f2f2"/><path d="M52 624L59.5 629L52 634Z" fill="#fff" stroke="#333" stroke-width="1.100" stroke-linejoin="round"/><path d="M77.5 629Q87 618.5 96.5 629Q87 639.5 77.5 629Z" fill="#9a9a9a"/><circle cx="87" cy="629" r="3.900" fill="#f2f2f2"/><circle cx="87" cy="629" r="2.300" fill="#9a9a9a"/><path d="M110.8 625.0L114.8 621.0H126.8V633.0L122.8 637.0H110.8Z" fill="#c9ccd2" stroke="#666" stroke-width="0.900" stroke-linejoin="round"/><path d="M110.8 625.0H122.8V637.0H110.8Z" fill="#dcdfe4" stroke="#666" stroke-width="0.900" stroke-linejoin="round"/><path d="M122.8 625.0L126.8 621.0" stroke="#666" stroke-width="0.900"/><g transform="translate(150 629) rotate(-38)" fill="none" stroke="#3a3a3a" stroke-width="2"><rect x="-9.300" y="-3.300" width="10.600" height="6.600" rx="3.300"/><rect x="-1.300" y="-3.300" width="10.600" height="6.600" rx="3.300"/></g><g transform="translate(326 600.300) rotate(45)"><rect x="-2.800" y="-10" width="5.600" height="14" fill="#f6b73c"/><rect x="-2.800" y="-13" width="5.600" height="3.500" rx="1.200" fill="#e6322e"/><path d="M-2.800 4L0 9.500L2.800 4Z" fill="#8a8a8a"/></g></svg>
<span class="t" style="left:125px;top:230.0px;font-size:13.91px;line-height:19px;color:#fff;font-weight:bold;transform:scaleX(0.9785);transform-origin:0 50%;">Top Hat Voron 2.4 350mm v8</span>
<span class="t" style="left:115px;top:259.0px;font-size:14.38px;line-height:20px;color:#333;transform:scaleX(0.9499);transform-origin:0 50%;">Document Settings</span>
<span class="t" style="left:115px;top:289.0px;font-size:14.38px;line-height:20px;color:#333;transform:scaleX(0.9498);transform-origin:0 50%;">Named Views</span>
<span class="t" style="left:146.2px;top:319.0px;font-size:14.38px;line-height:20px;color:#333;transform:scaleX(0.9516);transform-origin:0 50%;">Origin</span>
<span class="t" style="left:146.2px;top:349.0px;font-size:14.38px;line-height:20px;color:#333;transform:scaleX(0.9478);transform-origin:0 50%;">Joints</span>
<span class="t" style="left:177.3px;top:379.0px;font-size:14.38px;line-height:20px;color:#333;transform:scaleX(0.9494);transform-origin:0 50%;">Side Front Panels v10:1</span>
<span class="t" style="left:177.3px;top:409.0px;font-size:14.38px;line-height:20px;color:#333;transform:scaleX(0.9506);transform-origin:0 50%;">Side Rear Panels v4:1</span>
<span class="t" style="left:177.3px;top:439.0px;font-size:14.38px;line-height:20px;color:#333;transform:scaleX(0.9493);transform-origin:0 50%;">Front Right Panel v22:1</span>
<span class="t" style="left:177.3px;top:469.0px;font-size:14.38px;line-height:20px;color:#333;transform:scaleX(0.9477);transform-origin:0 50%;">Front Left Panel v6:1</span>
<span class="t" style="left:177.3px;top:499.0px;font-size:14.38px;line-height:20px;color:#333;transform:scaleX(0.9514);transform-origin:0 50%;">Side Front Panels v10:2</span>
<span class="t" style="left:177.3px;top:529.0px;font-size:14.38px;line-height:20px;color:#333;transform:scaleX(0.9506);transform-origin:0 50%;">Side Rear Panels v4:2</span>
<span class="t" style="left:177.3px;top:559.0px;font-size:14.38px;line-height:20px;color:#333;transform:scaleX(0.9483);transform-origin:0 50%;">Rear Right Panel v4:1</span>
<span class="t" style="left:177.3px;top:589.0px;font-size:14.38px;line-height:20px;color:#333;transform:scaleX(0.9475);transform-origin:0 50%;">Rear Left Panel v3:1</span>
<span class="t" style="left:177.3px;top:619.0px;font-size:14.38px;line-height:20px;color:#333;transform:scaleX(0.9488);transform-origin:0 50%;">Exhaust cover original v2:1</span>
<svg style="left:0;top:0" width="1920" height="1080" viewBox="0 0 1920 1080"><defs>
<filter id="blur8" x="-10%" y="-10%" width="120%" height="120%"><feGaussianBlur stdDeviation="9"/></filter>
<filter id="blur5" x="-10%" y="-10%" width="120%" height="120%"><feGaussianBlur stdDeviation="6"/></filter>
<linearGradient id="gBL" gradientUnits="userSpaceOnUse" x1="497" y1="0" x2="957" y2="0">
 <stop offset="0" stop-color="#383633"/><stop offset="0.1" stop-color="#454340"/><stop offset="0.3" stop-color="#4e4b46"/><stop offset="0.66" stop-color="#524f4a"/><stop offset="0.92" stop-color="#4d4a46"/><stop offset="1" stop-color="#474440"/></linearGradient>
<linearGradient id="gBR" gradientUnits="userSpaceOnUse" x1="957" y1="0" x2="1418" y2="0">
 <stop offset="0" stop-color="#585854"/><stop offset="0.11" stop-color="#6d6d69"/><stop offset="0.23" stop-color="#787874"/><stop offset="0.53" stop-color="#70706c"/><stop offset="0.85" stop-color="#62625e"/><stop offset="1" stop-color="#4a4a46"/></linearGradient>
<linearGradient id="gFL" gradientUnits="userSpaceOnUse" x1="442" y1="600" x2="957" y2="900">
 <stop offset="0" stop-color="#6b6b67"/><stop offset="0.6" stop-color="#666662"/><stop offset="1" stop-color="#60605c"/></linearGradient>
<linearGradient id="gFR" gradientUnits="userSpaceOnUse" x1="977" y1="890" x2="1452" y2="620">
 <stop offset="0" stop-color="#504c47"/><stop offset="0.5" stop-color="#534f4a"/><stop offset="1" stop-color="#57534d"/></linearGradient>
</defs><g filter="url(#blur8)" opacity="0.42"><polygon points="446,676 957,972 1000,960 1472,676 1440,640 957,900 480,640" fill="#8d8d8d"/></g><g filter="url(#blur5)" opacity="0.17"><polygon points="604,599 957,397 1310,600 1290,611 957,418 624,611" fill="#8a8a8a"/></g><polygon points="957.0,272.0 496.7,537.5 604.0,599.3 957.0,397.0" fill="url(#gBL)" stroke="#14130f" stroke-width="0.8" stroke-linejoin="round"/><polygon points="957.0,272.0 1418.3,538.3 1310.0,600.6 957.0,397.0" fill="url(#gBR)" stroke="#14130f" stroke-width="0.8" stroke-linejoin="round"/><polygon points="442.5,545.0 957.5,843.3 957.5,966.7 442.1,669.2" fill="url(#gFL)" stroke="#14130f" stroke-width="1" stroke-linejoin="round"/><polygon points="977.5,830.0 1452.5,557.5 1452.1,680.8 977.5,955.0" fill="url(#gFR)" stroke="#14130f" stroke-width="1" stroke-linejoin="round"/><polygon points="957.5,822.0 977.5,817.0 977.5,955.0 957.5,966.7" fill="#55514c" stroke="#14130f" stroke-width="1" stroke-linejoin="round"/><polygon points="1452.5,557.5 1452.5,545.0 1472.5,533.0 1472.5,668.8 1452.1,680.8" fill="#58544e" stroke="#14130f" stroke-width="1" stroke-linejoin="round"/><path d="M719.1 405.5V533.5M1194.4 457V534M699.6 693.8V817.8M1214.4 693.6V817.5" stroke="#14130f" stroke-width="1" fill="none"/><defs><linearGradient id="gEx" x1="0" y1="0" x2="0" y2="1"><stop offset="0" stop-color="#94948d"/><stop offset="1" stop-color="#6a6a64"/></linearGradient><clipPath id="exc"><polygon points="1120.4,373.7 1269.4,459.8 1269.4,500.6 1120.4,413.5"/></clipPath></defs><polygon points="1120.4,373.7 1269.4,459.8 1269.4,500.6 1120.4,413.5" fill="#4a4843"/><defs><linearGradient id="gS1" gradientUnits="userSpaceOnUse" x1="1120" y1="0" x2="1194" y2="0"><stop offset="0" stop-color="#4c4944"/><stop offset="1" stop-color="#55524c"/></linearGradient><linearGradient id="gS2" gradientUnits="userSpaceOnUse" x1="1194" y1="0" x2="1270" y2="0"><stop offset="0" stop-color="#5f5d57"/><stop offset="0.5" stop-color="#56544e"/><stop offset="1" stop-color="#4a4843"/></linearGradient></defs><g clip-path="url(#exc)"><polygon points="1140.7,402.4 1194.4,431.5 1194.4,456.8 1120.4,413.5" fill="url(#gS1)"/><polygon points="1194.4,431.5 1269.4,472 1269.4,500.6 1194.4,456.800" fill="url(#gS2)"/><polygon points="1140.7,385.4 1269.4,459.8 1269.4,472.0 1140.7,402.4" fill="#83837c"/><polygon points="1150.7,394.5 1158.2,398.8 1163.7,411.6 1145.2,401.5" fill="#2e2d29" stroke="#1a1916" stroke-width="0.700" stroke-linejoin="round"/><polygon points="1161.2,400.5 1179.7,411.1 1174.2,417.4 1166.7,413.3" fill="#2e2d29" stroke="#1a1916" stroke-width="0.700" stroke-linejoin="round"/><polygon points="1182.7,412.8 1190.2,417.0 1195.7,429.2 1177.2,419.0" fill="#2e2d29" stroke="#1a1916" stroke-width="0.700" stroke-linejoin="round"/><polygon points="1193.2,418.8 1211.7,429.3 1206.2,434.9 1198.7,430.8" fill="#2e2d29" stroke="#1a1916" stroke-width="0.700" stroke-linejoin="round"/><polygon points="1214.7,431.0 1222.2,435.3 1227.7,446.7 1209.2,436.6" fill="#2e2d29" stroke="#1a1916" stroke-width="0.700" stroke-linejoin="round"/><polygon points="1225.2,437.0 1243.7,447.6 1238.2,452.5 1230.7,448.3" fill="#2e2d29" stroke="#1a1916" stroke-width="0.700" stroke-linejoin="round"/><polygon points="1246.7,449.3 1254.2,453.6 1259.7,464.2 1241.2,454.1" fill="#2e2d29" stroke="#1a1916" stroke-width="0.700" stroke-linejoin="round"/><polygon points="1257.2,455.3 1268.2,461.6 1262.7,465.9 1262.7,465.9" fill="#2e2d29" stroke="#1a1916" stroke-width="0.700" stroke-linejoin="round"/><polygon points="1140.7,385.4 1143.2,386.8 1143.2,403.8 1140.7,402.4" fill="#9a9a93"/><polygon points="1120.4,373.7 1140.7,385.4 1140.7,402.4 1120.4,413.5" fill="url(#gEx)"/></g><polygon points="1120.4,373.7 1269.4,459.8 1269.4,500.6 1120.4,413.5" fill="none" stroke="#14130f" stroke-width="1" stroke-linejoin="round"/><path d="M1140.7 385.4V402.4L1120.4 413.5M1140.7 402.4L1269.4 472" fill="none" stroke="#14130f" stroke-width="0.8"/><path d="M1194.4 457L1194.4 453L1200 450L1201 451.500L1203.500 450L1202.500 448.500L1211 443.500" fill="none" stroke="#14130f" stroke-width="0.8"/><polygon points="1143.5,341.5 1150.0,336.3 1156.0,337.3 1167.5,346.0 1161.0,351.0" fill="#9b9b94" stroke="#3a3a36" stroke-width="0.8" stroke-linejoin="round"/><polygon points="1161.0,351.0 1167.5,346.0 1168.3,351.5 1164.0,354.5" fill="#6e6e68" stroke="#3a3a36" stroke-width="0.8" stroke-linejoin="round"/><polygon points="1273.0,415.5 1279.5,410.3 1285.5,411.3 1297.0,420.0 1290.5,425.0" fill="#9b9b94" stroke="#3a3a36" stroke-width="0.8" stroke-linejoin="round"/><polygon points="1290.5,425.0 1297.0,420.0 1297.8,425.5 1293.5,428.5" fill="#6e6e68" stroke="#3a3a36" stroke-width="0.8" stroke-linejoin="round"/><clipPath id="bc1"><polygon points="943.8,240.0 463.3,519.2 496.7,537.5 957.0,272.0 957.0,256.7"/></clipPath><g clip-path="url(#bc1)"><polygon points="440.0,532.7 960.0,230.6 960.0,238.0 440.0,539.7" fill="#5f5f58"/><polygon points="440.0,539.7 960.0,238.0 960.0,240.3 440.0,541.9" fill="#484742"/><polygon points="440.0,541.9 960.0,240.3 960.0,245.9 440.0,547.2" fill="#62625b"/><polygon points="440.0,547.2 960.0,245.9 960.0,252.4 440.0,553.4" fill="#6a6a62"/><polygon points="440.0,553.4 960.0,252.4 960.0,255.4 440.0,556.2" fill="#4e4d48"/><polygon points="440.0,556.2 960.0,255.4 960.0,262.2 440.0,562.6" fill="#727269"/><polygon points="440.0,562.6 960.0,262.2 960.0,267.3 440.0,567.4" fill="#61615a"/><polygon points="440.0,567.4 960.0,267.3 960.0,270.3 440.0,570.2" fill="#494843"/><line x1="440.0" y1="532.7" x2="960.0" y2="230.6" stroke="#14130f" stroke-width="1.15"/><line x1="440.0" y1="539.7" x2="960.0" y2="238.0" stroke="#14130f" stroke-width="1.15"/><line x1="440.0" y1="541.9" x2="960.0" y2="240.3" stroke="#14130f" stroke-width="1.15"/><line x1="440.0" y1="547.2" x2="960.0" y2="245.9" stroke="#14130f" stroke-width="1.15"/><line x1="440.0" y1="553.4" x2="960.0" y2="252.4" stroke="#14130f" stroke-width="1.15"/><line x1="440.0" y1="556.2" x2="960.0" y2="255.4" stroke="#14130f" stroke-width="1.15"/><line x1="440.0" y1="562.6" x2="960.0" y2="262.2" stroke="#14130f" stroke-width="1.15"/><line x1="440.0" y1="567.4" x2="960.0" y2="267.3" stroke="#14130f" stroke-width="1.15"/><line x1="440.0" y1="570.2" x2="960.0" y2="270.3" stroke="#14130f" stroke-width="1.15"/></g><polygon points="943.8,240.0 463.3,519.2 496.7,537.5 957.0,272.0 957.0,256.7" fill="none" stroke="#14130f" stroke-width="1.15" stroke-linejoin="round"/><clipPath id="bc2"><polygon points="956.7,232.9 1472.5,531.7 1472.5,539.5 1452.5,557.8 957.0,272.0 957.0,256.7 940.0,244.2 950.4,237.0"/></clipPath><g clip-path="url(#bc2)"><polygon points="935.0,220.3 1480.0,536.0 1480.0,543.1 935.0,227.6" fill="#5f5f58"/><polygon points="935.0,227.6 1480.0,543.1 1480.0,545.3 935.0,229.9" fill="#484742"/><polygon points="935.0,229.9 1480.0,545.3 1480.0,550.7 935.0,235.4" fill="#62625b"/><polygon points="935.0,235.4 1480.0,550.7 1480.0,556.9 935.0,241.8" fill="#6a6a62"/><polygon points="935.0,241.8 1480.0,556.9 1480.0,559.7 935.0,244.7" fill="#4e4d48"/><polygon points="935.0,244.7 1480.0,559.7 1480.0,566.3 935.0,251.4" fill="#727269"/><polygon points="935.0,251.4 1480.0,566.3 1480.0,571.1 935.0,256.4" fill="#61615a"/><polygon points="935.0,256.4 1480.0,571.1 1480.0,573.9 935.0,259.3" fill="#494843"/><line x1="935.0" y1="220.3" x2="1480.0" y2="536.0" stroke="#14130f" stroke-width="1.15"/><line x1="935.0" y1="227.6" x2="1480.0" y2="543.1" stroke="#14130f" stroke-width="1.15"/><line x1="935.0" y1="229.9" x2="1480.0" y2="545.3" stroke="#14130f" stroke-width="1.15"/><line x1="935.0" y1="235.4" x2="1480.0" y2="550.7" stroke="#14130f" stroke-width="1.15"/><line x1="935.0" y1="241.8" x2="1480.0" y2="556.9" stroke="#14130f" stroke-width="1.15"/><line x1="935.0" y1="244.7" x2="1480.0" y2="559.7" stroke="#14130f" stroke-width="1.15"/><line x1="935.0" y1="251.4" x2="1480.0" y2="566.3" stroke="#14130f" stroke-width="1.15"/><line x1="935.0" y1="256.4" x2="1480.0" y2="571.1" stroke="#14130f" stroke-width="1.15"/><line x1="935.0" y1="259.3" x2="1480.0" y2="573.9" stroke="#14130f" stroke-width="1.15"/></g><polygon points="956.7,232.9 1472.5,531.7 1472.5,539.5 1452.5,557.8 957.0,272.0 957.0,256.7 940.0,244.2 950.4,237.0" fill="none" stroke="#14130f" stroke-width="1.15" stroke-linejoin="round"/><clipPath id="bc3"><polygon points="957.9,804.6 1418.3,538.3 1452.5,557.5 977.5,830.0 977.3,816.7"/></clipPath><g clip-path="url(#bc3)"><polygon points="950.0,809.2 1460.0,514.2 1460.0,521.4 950.0,816.0" fill="#5f5f58"/><polygon points="950.0,816.0 1460.0,521.4 1460.0,523.7 950.0,818.1" fill="#484742"/><polygon points="950.0,818.1 1460.0,523.7 1460.0,529.2 950.0,823.3" fill="#62625b"/><polygon points="950.0,823.3 1460.0,529.2 1460.0,535.7 950.0,829.3" fill="#6a6a62"/><polygon points="950.0,829.3 1460.0,535.7 1460.0,538.6 950.0,832.0" fill="#4e4d48"/><polygon points="950.0,832.0 1460.0,538.6 1460.0,545.3 950.0,838.4" fill="#727269"/><polygon points="950.0,838.4 1460.0,545.3 1460.0,550.3 950.0,843.1" fill="#61615a"/><polygon points="950.0,843.1 1460.0,550.3 1460.0,553.2 950.0,845.8" fill="#494843"/><line x1="950.0" y1="809.2" x2="1460.0" y2="514.2" stroke="#14130f" stroke-width="1.15"/><line x1="950.0" y1="816.0" x2="1460.0" y2="521.4" stroke="#14130f" stroke-width="1.15"/><line x1="950.0" y1="818.1" x2="1460.0" y2="523.7" stroke="#14130f" stroke-width="1.15"/><line x1="950.0" y1="823.3" x2="1460.0" y2="529.2" stroke="#14130f" stroke-width="1.15"/><line x1="950.0" y1="829.3" x2="1460.0" y2="535.7" stroke="#14130f" stroke-width="1.15"/><line x1="950.0" y1="832.0" x2="1460.0" y2="538.6" stroke="#14130f" stroke-width="1.15"/><line x1="950.0" y1="838.4" x2="1460.0" y2="545.3" stroke="#14130f" stroke-width="1.15"/><line x1="950.0" y1="843.1" x2="1460.0" y2="550.3" stroke="#14130f" stroke-width="1.15"/><line x1="950.0" y1="845.8" x2="1460.0" y2="553.2" stroke="#14130f" stroke-width="1.15"/></g><polygon points="957.9,804.6 1418.3,538.3 1452.5,557.5 977.5,830.0 977.3,816.7" fill="none" stroke="#14130f" stroke-width="1.15" stroke-linejoin="round"/><clipPath id="bc4"><polygon points="463.3,518.5 977.0,816.7 964.2,824.2 957.5,843.3 442.5,545.0 442.5,530.8 449.2,526.2"/></clipPath><g clip-path="url(#bc4)"><polygon points="440.0,505.0 980.0,817.4 980.0,824.6 440.0,512.2" fill="#5f5f58"/><polygon points="440.0,512.2 980.0,824.6 980.0,826.9 440.0,514.4" fill="#484742"/><polygon points="440.0,514.4 980.0,826.9 980.0,832.4 440.0,519.9" fill="#62625b"/><polygon points="440.0,519.9 980.0,832.4 980.0,838.8 440.0,526.2" fill="#6a6a62"/><polygon points="440.0,526.2 980.0,838.8 980.0,841.7 440.0,529.1" fill="#4e4d48"/><polygon points="440.0,529.1 980.0,841.7 980.0,848.5 440.0,535.8" fill="#727269"/><polygon points="440.0,535.8 980.0,848.5 980.0,853.4 440.0,540.7" fill="#61615a"/><polygon points="440.0,540.7 980.0,853.4 980.0,856.3 440.0,543.6" fill="#494843"/><line x1="440.0" y1="505.0" x2="980.0" y2="817.4" stroke="#14130f" stroke-width="1.15"/><line x1="440.0" y1="512.2" x2="980.0" y2="824.6" stroke="#14130f" stroke-width="1.15"/><line x1="440.0" y1="514.4" x2="980.0" y2="826.9" stroke="#14130f" stroke-width="1.15"/><line x1="440.0" y1="519.9" x2="980.0" y2="832.4" stroke="#14130f" stroke-width="1.15"/><line x1="440.0" y1="526.2" x2="980.0" y2="838.8" stroke="#14130f" stroke-width="1.15"/><line x1="440.0" y1="529.1" x2="980.0" y2="841.7" stroke="#14130f" stroke-width="1.15"/><line x1="440.0" y1="535.8" x2="980.0" y2="848.5" stroke="#14130f" stroke-width="1.15"/><line x1="440.0" y1="540.7" x2="980.0" y2="853.4" stroke="#14130f" stroke-width="1.15"/><line x1="440.0" y1="543.6" x2="980.0" y2="856.3" stroke="#14130f" stroke-width="1.15"/></g><polygon points="463.3,518.5 977.0,816.7 964.2,824.2 957.5,843.3 442.5,545.0 442.5,530.8 449.2,526.2" fill="none" stroke="#14130f" stroke-width="1.15" stroke-linejoin="round"/><path d="M701.8 381.5L719.1 392.5V405.5M1214.4 382.2L1195.500 394.7V410M717.5 666L700.2 679V694M1197 666.5L1214.4 677.5V693.6" fill="none" stroke="#14130f" stroke-width="1"/><path d="M1454.500 546L1458.300 544.500V552.500L1455.500 557" fill="#77756e" stroke="#14130f" stroke-width="0.900" stroke-linejoin="round"/><path d="M1466.900 544.600L1471.300 545.400V549.200L1468.300 550L1466.700 547.900Z" fill="#d8d8d8" stroke="#14130f" stroke-width="0.900" stroke-linejoin="round"/><path d="M959 829.5L963 827.5V837L966.500 838V831" fill="none" stroke="#14130f" stroke-width="0.9"/><path d="M971.500 829V835L975 836L976.500 834.500" fill="none" stroke="#14130f" stroke-width="0.9"/><polygon points="998.8,933.3 1034.2,914.2 1034.2,937.1 1014.2,948.8 998.8,939.6" fill="#55514c" stroke="#14130f" stroke-width="1" stroke-linejoin="round"/><polygon points="993.8,934.4 1032.5,912.1 1034.2,914.2 998.8,933.3" fill="#7a7872" stroke="#14130f" stroke-width="0.9" stroke-linejoin="round"/><polygon points="993.8,934.4 998.8,933.3 998.8,939.6 993.8,939.2" fill="#66635d" stroke="#14130f" stroke-width="0.9" stroke-linejoin="round"/><polygon points="1398.3,700.0 1435.4,678.8 1436.2,680.8 1434.6,689.2 1421.7,712.5 1400.4,725.0 1396.7,722.5 1398.3,719.0" fill="#595650" stroke="#14130f" stroke-width="1" stroke-linejoin="round"/><path d="M1400.4 725V702.500L1436.250 681" fill="none" stroke="#14130f" stroke-width="0.8"/><ellipse cx="947.5" cy="950" rx="3.900" ry="5.300" transform="rotate(-22 947.5 950)" fill="#74746f" stroke="#14130f" stroke-width="1"/><ellipse cx="452.3" cy="664.2" rx="3.900" ry="5.300" transform="rotate(-22 452.3 664.2)" fill="#74746f" stroke="#14130f" stroke-width="1"/></svg>
<div class="a" style="left:814px;top:985px;width:296px;height:29.500px;background:#f0f0f0"></div>
<svg style="left:0;top:975px" width="1920" height="105" viewBox="0 975 1920 105"><defs><linearGradient id="mon" x1="0" y1="0" x2="0" y2="1"><stop offset="0" stop-color="#b9cdea"/><stop offset="1" stop-color="#8faadb"/></linearGradient><linearGradient id="gry" x1="0" y1="0" x2="0" y2="1"><stop offset="0" stop-color="#e8e8ea"/><stop offset="1" stop-color="#8b8f9c"/></linearGradient><radialGradient id="lens" cx="0.4" cy="0.35" r="0.7"><stop offset="0" stop-color="#ffffff"/><stop offset="1" stop-color="#dfe6ea"/></radialGradient></defs><ellipse cx="827.500" cy="998.700" rx="4.500" ry="9" fill="none" stroke="#555" stroke-width="1" transform="rotate(-8 827.5 998.7)"/><path d="M824 992.500Q818.500 995 818.500 998.500Q819 1003 827 1003Q836.500 1002.500 836.500 997.500Q836 993.500 831 993" fill="none" stroke="#555" stroke-width="1"/><path d="M826.500 996.500v4M824.500 998.500h4" stroke="#2f7fc0" stroke-width="1.200"/><circle cx="833" cy="995.500" r="0.900" fill="#2f7fc0"/><circle cx="830.500" cy="992" r="0.900" fill="#2f7fc0"/><path d="M844.0 996.5h6.600l-3.300 4.500z" fill="#2a2a2a"/><path d="M861.500 996L866 992.500L868 994L873 991.500V996.500" fill="#d8d8d8" stroke="#666" stroke-width="0.900" stroke-linejoin="round"/><rect x="860" y="996.300" width="17" height="11.300" fill="#e2e2e2" stroke="#666" stroke-width="1"/><rect x="862.500" y="1000" width="12" height="5.300" fill="#9a9fb0" stroke="#555" stroke-width="0.800"/><path d="M895.500 1000.500Q893 997.500 892 998.500Q891.500 1000 894.500 1004L898 1008.500H906Q908.500 1004 909.500 997.500Q909.500 996 908.300 996.500L907 1000V994Q906.500 992.500 905.300 993.500L904.800 999V991.500Q904 990.300 903 991.500L902.600 998.500L902 991.700Q901 990.500 900 991.800L900 999.500L899 993.500Q898 992.300 897.200 993.500L897.500 1002.500Z" fill="#fafafa" stroke="#444" stroke-width="0.900" stroke-linejoin="round"/><circle cx="930.700" cy="996.300" r="6.300" fill="url(#lens)" stroke="#555" stroke-width="1.100"/><path d="M935.500 1001.200L942.500 1007.500" stroke="#333" stroke-width="2.400" stroke-linecap="round"/><path d="M939 991.500h4M941 989.500v4M939 995.500h4" stroke="#333" stroke-width="0.900"/><rect x="956.500" y="990.500" width="19" height="17.500" fill="none" stroke="#555" stroke-width="0.900" stroke-dasharray="2.500 1.500"/><circle cx="963.300" cy="997.900" r="6.300" fill="url(#lens)" stroke="#555" stroke-width="1.100"/><path d="M968 1002.800L974.500 1008.500" stroke="#333" stroke-width="2.400" stroke-linecap="round"/><path d="M982.2 996.5h6.600l-3.300 4.500z" fill="#2a2a2a"/><rect x="998.500" y="989.700" width="17.800" height="14" rx="1" fill="#e8e8e8" stroke="#666" stroke-width="0.900"/><rect x="1000.300" y="991.400" width="14.200" height="10.500" fill="url(#mon)" stroke="#5f7db5" stroke-width="0.700"/><rect x="1005.500" y="1003.700" width="4" height="2.500" fill="#999"/><rect x="1002" y="1006" width="11" height="2" rx="1" fill="#aaa"/><path d="M1019.9000000000001 996.5h6.600l-3.300 4.500z" fill="#2a2a2a"/><rect x="1036.500" y="990.500" width="18" height="17.500" fill="url(#gry)" stroke="#555" stroke-width="0.900"/><path d="M1041 990.500V1008M1045.500 990.500V1008M1050 990.500V1008M1036.500 994.900H1054.500M1036.500 999.300H1054.500M1036.500 1003.700H1054.500" stroke="#555" stroke-width="0.800"/><path d="M1059.0 996.5h6.600l-3.300 4.500z" fill="#2a2a2a"/><rect x="1075.300" y="991.700" width="18" height="14.800" rx="1" fill="#8fb0dc" stroke="#4a72ad" stroke-width="1"/><path d="M1084.300 991.700V1006.500M1075.300 999H1093.300" stroke="#4a72ad" stroke-width="1.200"/><path d="M1097.4 996.5h6.600l-3.300 4.500z" fill="#2a2a2a"/><rect x="1" y="1023.500" width="1919" height="56.500" fill="#f2f2f2"/><path d="M1 1023.500H1920" stroke="#cdcdcd" stroke-width="1.200"/><rect x="14.800" y="1046" width="2.300" height="17" fill="#3e3e3e"/><path d="M30 1045.500V1062.500L18 1054Z" fill="#3e3e3e"/><path d="M58 1045.500V1062.500L45.500 1054Z" fill="#3e3e3e"/><rect x="59.300" y="1050" width="1.800" height="8" fill="#3e3e3e"/><path d="M76.500 1044.500V1063.500L91.500 1054Z" fill="#3e3e3e"/><rect x="106.300" y="1050" width="1.800" height="8" fill="#3e3e3e"/><path d="M109.500 1045.500V1062.500L122.500 1054Z" fill="#3e3e3e"/><path d="M140 1045.500V1062.500L152 1054Z" fill="#3e3e3e"/><rect x="152.700" y="1046" width="2.300" height="17" fill="#3e3e3e"/><path d="M194 1074.400H735" stroke="#c8c8c8" stroke-width="2.600" fill="none"/><path d="M194.9 1067V1074M223.5 1067V1074M253.5 1067V1074M283.5 1067V1074M313.5 1067V1074M343.5 1067V1074M373.5 1067V1074M403.5 1067V1074M433.5 1067V1074M463.5 1067V1074M493.5 1067V1074M523.5 1067V1074M553.5 1067V1074M583.5 1067V1074M613.5 1067V1074M643.5 1067V1074M673.5 1067V1074M703.5 1067V1074M733.5 1067V1074" stroke="#c8c8c8" stroke-width="2.200" fill="none"/><path d="M184.1 1047.3999999999999L188.1 1043.3999999999999H203.1V1057.8L199.1 1062.3999999999999H184.1Z" fill="#d4d4d4" stroke="#707070" stroke-width="1" stroke-linejoin="round"/><path d="M188.1 1043.5H202.9" fill="none" stroke="#5a5a5a" stroke-width="1.200"/><path d="M202.7 1043.3999999999999V1058.0" fill="none" stroke="#565656" stroke-width="1.800"/><path d="M184.1 1047.3999999999999H199.1V1062.3999999999999M199.1 1047.3999999999999L202.9 1043.6" fill="none" stroke="#b4b4b4" stroke-width="0.700"/><g transform="translate(193.2 1053.2) rotate(-35)" fill="none" stroke="#8c8c8c" stroke-width="1"><rect x="-8.200" y="-3.200" width="9.500" height="6.400" rx="3.200"/><rect x="-1.300" y="-3.200" width="9.500" height="6.400" rx="3.200"/></g><path d="M214.1 1047.3999999999999L218.1 1043.3999999999999H233.1V1057.8L229.1 1062.3999999999999H214.1Z" fill="#d4d4d4" stroke="#707070" stroke-width="1" stroke-linejoin="round"/><path d="M218.1 1043.5H232.9" fill="none" stroke="#5a5a5a" stroke-width="1.200"/><path d="M232.7 1043.3999999999999V1058.0" fill="none" stroke="#565656" stroke-width="1.800"/><path d="M214.1 1047.3999999999999H229.1V1062.3999999999999M229.1 1047.3999999999999L232.9 1043.6" fill="none" stroke="#b4b4b4" stroke-width="0.700"/><g transform="translate(223.2 1053.2) rotate(-35)" fill="none" stroke="#8c8c8c" stroke-width="1"><rect x="-8.200" y="-3.200" width="9.500" height="6.400" rx="3.200"/><rect x="-1.300" y="-3.200" width="9.500" height="6.400" rx="3.200"/></g><path d="M244.1 1047.3999999999999L248.1 1043.3999999999999H263.1V1057.8L259.1 1062.3999999999999H244.1Z" fill="#d4d4d4" stroke="#707070" stroke-width="1" stroke-linejoin="round"/><path d="M248.1 1043.5H262.9" fill="none" stroke="#5a5a5a" stroke-width="1.200"/><path d="M262.7 1043.3999999999999V1058.0" fill="none" stroke="#565656" stroke-width="1.800"/><path d="M244.1 1047.3999999999999H259.1V1062.3999999999999M259.1 1047.3999999999999L262.9 1043.6" fill="none" stroke="#b4b4b4" stroke-width="0.700"/><g transform="translate(253.2 1053.2) rotate(-35)" fill="none" stroke="#8c8c8c" stroke-width="1"><rect x="-8.200" y="-3.200" width="9.500" height="6.400" rx="3.200"/><rect x="-1.300" y="-3.200" width="9.500" height="6.400" rx="3.200"/></g><path d="M274.1 1047.3999999999999L278.1 1043.3999999999999H293.1V1057.8L289.1 1062.3999999999999H274.1Z" fill="#d4d4d4" stroke="#707070" stroke-width="1" stroke-linejoin="round"/><path d="M278.1 1043.5H292.9" fill="none" stroke="#5a5a5a" stroke-width="1.200"/><path d="M292.7 1043.3999999999999V1058.0" fill="none" stroke="#565656" stroke-width="1.800"/><path d="M274.1 1047.3999999999999H289.1V1062.3999999999999M289.1 1047.3999999999999L292.9 1043.6" fill="none" stroke="#b4b4b4" stroke-width="0.700"/><g transform="translate(283.2 1053.2) rotate(-35)" fill="none" stroke="#8c8c8c" stroke-width="1"><rect x="-8.200" y="-3.200" width="9.500" height="6.400" rx="3.200"/><rect x="-1.300" y="-3.200" width="9.500" height="6.400" rx="3.200"/></g><path d="M304.1 1049.3Q304.1 1044.0 308.5 1043.3999999999999L312.1 1044.3999999999999V1051.8L310.1 1054.8V1058.8L306.5 1062.3999999999999L304.1 1060.8Z" fill="#d0d0d0" stroke="#707070" stroke-width="0.900" stroke-linejoin="round"/><path d="M308.5 1043.3999999999999Q306.9 1046.8 306.9 1050.8V1061.8" fill="none" stroke="#9a9a9a" stroke-width="0.700"/><path d="M315.1 1054.8V1047.8L318.1 1044.3999999999999L323.1 1049.3V1062.3999999999999L319.5 1059.3H315.1Z" fill="#d0d0d0" stroke="#707070" stroke-width="0.900" stroke-linejoin="round"/><path d="M318.1 1044.3999999999999V1059.3" stroke="#9a9a9a" stroke-width="0.700"/><path d="M315.3 1046.8L316.5 1046.8L316.5 1051.3L315.3 1051.3Z" fill="#2f86c8"/><path d="M310.1 1051.8L312.5 1049.8L312.5 1054.3L310.1 1056.3Z" fill="#2f86c8"/><path d="M312.5 1051.8H315.1" stroke="#bfe3f7" stroke-width="1.600"/><path d="M334.1 1047.3999999999999L338.1 1043.3999999999999H353.1V1057.8L349.1 1062.3999999999999H334.1Z" fill="#d4d4d4" stroke="#707070" stroke-width="1" stroke-linejoin="round"/><path d="M338.1 1043.5H352.9" fill="none" stroke="#5a5a5a" stroke-width="1.200"/><path d="M352.7 1043.3999999999999V1058.0" fill="none" stroke="#565656" stroke-width="1.800"/><path d="M334.1 1047.3999999999999H349.1V1062.3999999999999M349.1 1047.3999999999999L352.9 1043.6" fill="none" stroke="#b4b4b4" stroke-width="0.700"/><g transform="translate(343.2 1053.2) rotate(-35)" fill="none" stroke="#8c8c8c" stroke-width="1"><rect x="-8.200" y="-3.200" width="9.500" height="6.400" rx="3.200"/><rect x="-1.300" y="-3.200" width="9.500" height="6.400" rx="3.200"/></g><path d="M364.1 1047.3999999999999L368.1 1043.3999999999999H383.1V1057.8L379.1 1062.3999999999999H364.1Z" fill="#d4d4d4" stroke="#707070" stroke-width="1" stroke-linejoin="round"/><path d="M368.1 1043.5H382.9" fill="none" stroke="#5a5a5a" stroke-width="1.200"/><path d="M382.7 1043.3999999999999V1058.0" fill="none" stroke="#565656" stroke-width="1.800"/><path d="M364.1 1047.3999999999999H379.1V1062.3999999999999M379.1 1047.3999999999999L382.9 1043.6" fill="none" stroke="#b4b4b4" stroke-width="0.700"/><g transform="translate(373.2 1053.2) rotate(-35)" fill="none" stroke="#8c8c8c" stroke-width="1"><rect x="-8.200" y="-3.200" width="9.500" height="6.400" rx="3.200"/><rect x="-1.300" y="-3.200" width="9.500" height="6.400" rx="3.200"/></g><path d="M394.1 1049.3Q394.1 1044.0 398.5 1043.3999999999999L402.1 1044.3999999999999V1051.8L400.1 1054.8V1058.8L396.5 1062.3999999999999L394.1 1060.8Z" fill="#d0d0d0" stroke="#707070" stroke-width="0.900" stroke-linejoin="round"/><path d="M398.5 1043.3999999999999Q396.9 1046.8 396.9 1050.8V1061.8" fill="none" stroke="#9a9a9a" stroke-width="0.700"/><path d="M405.1 1054.8V1047.8L408.1 1044.3999999999999L413.1 1049.3V1062.3999999999999L409.5 1059.3H405.1Z" fill="#d0d0d0" stroke="#707070" stroke-width="0.900" stroke-linejoin="round"/><path d="M408.1 1044.3999999999999V1059.3" stroke="#9a9a9a" stroke-width="0.700"/><path d="M405.3 1046.8L406.5 1046.8L406.5 1051.3L405.3 1051.3Z" fill="#2f86c8"/><path d="M400.1 1051.8L402.5 1049.8L402.5 1054.3L400.1 1056.3Z" fill="#2f86c8"/><path d="M402.5 1051.8H405.1" stroke="#bfe3f7" stroke-width="1.600"/><path d="M424.1 1047.3999999999999L428.1 1043.3999999999999H443.1V1057.8L439.1 1062.3999999999999H424.1Z" fill="#d4d4d4" stroke="#707070" stroke-width="1" stroke-linejoin="round"/><path d="M428.1 1043.5H442.9" fill="none" stroke="#5a5a5a" stroke-width="1.200"/><path d="M442.7 1043.3999999999999V1058.0" fill="none" stroke="#565656" stroke-width="1.800"/><path d="M424.1 1047.3999999999999H439.1V1062.3999999999999M439.1 1047.3999999999999L442.9 1043.6" fill="none" stroke="#b4b4b4" stroke-width="0.700"/><g transform="translate(433.2 1053.2) rotate(-35)" fill="none" stroke="#8c8c8c" stroke-width="1"><rect x="-8.200" y="-3.200" width="9.500" height="6.400" rx="3.200"/><rect x="-1.300" y="-3.200" width="9.500" height="6.400" rx="3.200"/></g><path d="M454.1 1049.3Q454.1 1044.0 458.5 1043.3999999999999L462.1 1044.3999999999999V1051.8L460.1 1054.8V1058.8L456.5 1062.3999999999999L454.1 1060.8Z" fill="#d0d0d0" stroke="#707070" stroke-width="0.900" stroke-linejoin="round"/><path d="M458.5 1043.3999999999999Q456.9 1046.8 456.9 1050.8V1061.8" fill="none" stroke="#9a9a9a" stroke-width="0.700"/><path d="M465.1 1054.8V1047.8L468.1 1044.3999999999999L473.1 1049.3V1062.3999999999999L469.5 1059.3H465.1Z" fill="#d0d0d0" stroke="#707070" stroke-width="0.900" stroke-linejoin="round"/><path d="M468.1 1044.3999999999999V1059.3" stroke="#9a9a9a" stroke-width="0.700"/><path d="M465.3 1046.8L466.5 1046.8L466.5 1051.3L465.3 1051.3Z" fill="#2f86c8"/><path d="M460.1 1051.8L462.5 1049.8L462.5 1054.3L460.1 1056.3Z" fill="#2f86c8"/><path d="M462.5 1051.8H465.1" stroke="#bfe3f7" stroke-width="1.600"/><path d="M484.1 1047.3999999999999L488.1 1043.3999999999999H503.1V1057.8L499.1 1062.3999999999999H484.1Z" fill="#d4d4d4" stroke="#707070" stroke-width="1" stroke-linejoin="round"/><path d="M488.1 1043.5H502.9" fill="none" stroke="#5a5a5a" stroke-width="1.200"/><path d="M502.7 1043.3999999999999V1058.0" fill="none" stroke="#565656" stroke-width="1.800"/><path d="M484.1 1047.3999999999999H499.1V1062.3999999999999M499.1 1047.3999999999999L502.9 1043.6" fill="none" stroke="#b4b4b4" stroke-width="0.700"/><g transform="translate(493.2 1053.2) rotate(-35)" fill="none" stroke="#8c8c8c" stroke-width="1"><rect x="-8.200" y="-3.200" width="9.500" height="6.400" rx="3.200"/><rect x="-1.300" y="-3.200" width="9.500" height="6.400" rx="3.200"/></g><path d="M514.1 1049.3Q514.1 1044.0 518.5 1043.3999999999999L522.1 1044.3999999999999V1051.8L520.1 1054.8V1058.8L516.5 1062.3999999999999L514.1 1060.8Z" fill="#d0d0d0" stroke="#707070" stroke-width="0.900" stroke-linejoin="round"/><path d="M518.5 1043.3999999999999Q516.9 1046.8 516.9 1050.8V1061.8" fill="none" stroke="#9a9a9a" stroke-width="0.700"/><path d="M525.1 1054.8V1047.8L528.1 1044.3999999999999L533.1 1049.3V1062.3999999999999L529.5 1059.3H525.1Z" fill="#d0d0d0" stroke="#707070" stroke-width="0.900" stroke-linejoin="round"/><path d="M528.1 1044.3999999999999V1059.3" stroke="#9a9a9a" stroke-width="0.700"/><path d="M525.3 1046.8L526.5 1046.8L526.5 1051.3L525.3 1051.3Z" fill="#2f86c8"/><path d="M520.1 1051.8L522.5 1049.8L522.5 1054.3L520.1 1056.3Z" fill="#2f86c8"/><path d="M522.5 1051.8H525.1" stroke="#bfe3f7" stroke-width="1.600"/><path d="M544.1 1047.3999999999999L548.1 1043.3999999999999H563.1V1057.8L559.1 1062.3999999999999H544.1Z" fill="#d4d4d4" stroke="#707070" stroke-width="1" stroke-linejoin="round"/><path d="M548.1 1043.5H562.9" fill="none" stroke="#5a5a5a" stroke-width="1.200"/><path d="M562.7 1043.3999999999999V1058.0" fill="none" stroke="#565656" stroke-width="1.800"/><path d="M544.1 1047.3999999999999H559.1V1062.3999999999999M559.1 1047.3999999999999L562.9 1043.6" fill="none" stroke="#b4b4b4" stroke-width="0.700"/><g transform="translate(553.2 1053.2) rotate(-35)" fill="none" stroke="#8c8c8c" stroke-width="1"><rect x="-8.200" y="-3.200" width="9.500" height="6.400" rx="3.200"/><rect x="-1.300" y="-3.200" width="9.500" height="6.400" rx="3.200"/></g><path d="M574.1 1049.3Q574.1 1044.0 578.5 1043.3999999999999L582.1 1044.3999999999999V1051.8L580.1 1054.8V1058.8L576.5 1062.3999999999999L574.1 1060.8Z" fill="#d0d0d0" stroke="#707070" stroke-width="0.900" stroke-linejoin="round"/><path d="M578.5 1043.3999999999999Q576.9 1046.8 576.9 1050.8V1061.8" fill="none" stroke="#9a9a9a" stroke-width="0.700"/><path d="M585.1 1054.8V1047.8L588.1 1044.3999999999999L593.1 1049.3V1062.3999999999999L589.5 1059.3H585.1Z" fill="#d0d0d0" stroke="#707070" stroke-width="0.900" stroke-linejoin="round"/><path d="M588.1 1044.3999999999999V1059.3" stroke="#9a9a9a" stroke-width="0.700"/><path d="M585.3 1046.8L586.5 1046.8L586.5 1051.3L585.3 1051.3Z" fill="#2f86c8"/><path d="M580.1 1051.8L582.5 1049.8L582.5 1054.3L580.1 1056.3Z" fill="#2f86c8"/><path d="M582.5 1051.8H585.1" stroke="#bfe3f7" stroke-width="1.600"/><path d="M604.1 1049.3Q604.1 1044.0 608.5 1043.3999999999999L612.1 1044.3999999999999V1051.8L610.1 1054.8V1058.8L606.5 1062.3999999999999L604.1 1060.8Z" fill="#d0d0d0" stroke="#707070" stroke-width="0.900" stroke-linejoin="round"/><path d="M608.5 1043.3999999999999Q606.9 1046.8 606.9 1050.8V1061.8" fill="none" stroke="#9a9a9a" stroke-width="0.700"/><path d="M615.1 1054.8V1047.8L618.1 1044.3999999999999L623.1 1049.3V1062.3999999999999L619.5 1059.3H615.1Z" fill="#d0d0d0" stroke="#707070" stroke-width="0.900" stroke-linejoin="round"/><path d="M618.1 1044.3999999999999V1059.3" stroke="#9a9a9a" stroke-width="0.700"/><path d="M615.3 1046.8L616.5 1046.8L616.5 1051.3L615.3 1051.3Z" fill="#2f86c8"/><path d="M610.1 1051.8L612.5 1049.8L612.5 1054.3L610.1 1056.3Z" fill="#2f86c8"/><path d="M612.5 1051.8H615.1" stroke="#bfe3f7" stroke-width="1.600"/><path d="M634.1 1049.3Q634.1 1044.0 638.5 1043.3999999999999L642.1 1044.3999999999999V1051.8L640.1 1054.8V1058.8L636.5 1062.3999999999999L634.1 1060.8Z" fill="#d0d0d0" stroke="#707070" stroke-width="0.900" stroke-linejoin="round"/><path d="M638.5 1043.3999999999999Q636.9 1046.8 636.9 1050.8V1061.8" fill="none" stroke="#9a9a9a" stroke-width="0.700"/><path d="M645.1 1054.8V1047.8L648.1 1044.3999999999999L653.1 1049.3V1062.3999999999999L649.5 1059.3H645.1Z" fill="#d0d0d0" stroke="#707070" stroke-width="0.900" stroke-linejoin="round"/><path d="M648.1 1044.3999999999999V1059.3" stroke="#9a9a9a" stroke-width="0.700"/><path d="M645.3 1046.8L646.5 1046.8L646.5 1051.3L645.3 1051.3Z" fill="#2f86c8"/><path d="M640.1 1051.8L642.5 1049.8L642.5 1054.3L640.1 1056.3Z" fill="#2f86c8"/><path d="M642.5 1051.8H645.1" stroke="#bfe3f7" stroke-width="1.600"/><path d="M664.1 1049.3Q664.1 1044.0 668.5 1043.3999999999999L672.1 1044.3999999999999V1051.8L670.1 1054.8V1058.8L666.5 1062.3999999999999L664.1 1060.8Z" fill="#d0d0d0" stroke="#707070" stroke-width="0.900" stroke-linejoin="round"/><path d="M668.5 1043.3999999999999Q666.9 1046.8 666.9 1050.8V1061.8" fill="none" stroke="#9a9a9a" stroke-width="0.700"/><path d="M675.1 1054.8V1047.8L678.1 1044.3999999999999L683.1 1049.3V1062.3999999999999L679.5 1059.3H675.1Z" fill="#d0d0d0" stroke="#707070" stroke-width="0.900" stroke-linejoin="round"/><path d="M678.1 1044.3999999999999V1059.3" stroke="#9a9a9a" stroke-width="0.700"/><path d="M675.3 1046.8L676.5 1046.8L676.5 1051.3L675.3 1051.3Z" fill="#2f86c8"/><path d="M670.1 1051.8L672.5 1049.8L672.5 1054.3L670.1 1056.3Z" fill="#2f86c8"/><path d="M672.5 1051.8H675.1" stroke="#bfe3f7" stroke-width="1.600"/><rect x="694" y="1043.5" width="19.500" height="19.500" fill="#fff" stroke="#777" stroke-width="0.800"/><rect x="694" y="1043.5" width="10" height="10" fill="#5a9fd8"/><rect x="703.5" y="1053.0" width="10" height="10" fill="#5a9fd8"/><path d="M701 1053.5h5v3.500" stroke="#2a5f95" stroke-width="1" fill="none"/><rect x="724" y="1043.5" width="7" height="19.500" fill="#fff" stroke="#888" stroke-width="0.800"/><rect x="731" y="1043.5" width="13" height="8.500" fill="#5a9fd8" stroke="#3f7fbd" stroke-width="0.600"/><path d="M741 1036H756V1039L751.500 1043.500H745.500L741 1039Z" fill="#4a4a4a"/><rect x="747" y="1043" width="3" height="32" fill="#4a4a4a"/><rect x="1892.200" y="1043.800" width="5" height="20.200" rx="0.800" fill="#8c8c8c" transform="rotate(0 1894.7 1053.9)"/><rect x="1892.200" y="1043.800" width="5" height="20.200" rx="0.800" fill="#8c8c8c" transform="rotate(45 1894.7 1053.9)"/><rect x="1892.200" y="1043.800" width="5" height="20.200" rx="0.800" fill="#8c8c8c" transform="rotate(90 1894.7 1053.9)"/><rect x="1892.200" y="1043.800" width="5" height="20.200" rx="0.800" fill="#8c8c8c" transform="rotate(135 1894.7 1053.9)"/><circle cx="1894.700" cy="1053.900" r="7.200" fill="#8c8c8c"/><circle cx="1894.700" cy="1053.900" r="3.200" fill="#f2f2f2"/></svg>
<svg style="left:1780px;top:190px" width="140" height="130" viewBox="1780 190 140 130"><defs><filter id="vb" x="-30%" y="-30%" width="160%" height="160%"><feGaussianBlur stdDeviation="4"/></filter></defs><polygon points="1828,270 1858,292 1892,270 1862,252" fill="#9a9a9a" opacity="0.55" filter="url(#vb)"/><polygon points="1823.100,227.300 1857.200,211.100 1892.300,228 1857.200,246.800" fill="#ededed" stroke="#666" stroke-width="0.700" stroke-linejoin="round"/><polygon points="1823.100,227.300 1857.200,246.800 1857.200,287.600 1825.500,265.600" fill="#e3e3e3" stroke="#666" stroke-width="0.700" stroke-linejoin="round"/><polygon points="1857.200,246.800 1892.300,228 1889,264.300 1857.200,287.600" fill="#dcdcdc" stroke="#666" stroke-width="0.700" stroke-linejoin="round"/><path d="M1820.900 220.800L1825.500 265.600" stroke="#5a5ae0" stroke-width="2.200"/><path d="M1825.500 266.200L1863 294" stroke="#ec8b8b" stroke-width="2.200"/><text transform="matrix(0.86 0.42 -0.86 0.48 1851.500 222)" font-size="9" fill="#8c8c8c" font-family="Liberation Sans, sans-serif">TOP</text><text transform="matrix(0.8 0.5 0 1 1828.500 250.500)" font-size="9.500" fill="#8c8c8c" font-family="Liberation Sans, sans-serif" textLength="29">FRONT</text><text transform="matrix(0.82 -0.5 0 1 1865.500 268.500)" font-size="9.500" fill="#8c8c8c" font-family="Liberation Sans, sans-serif" textLength="24">RIGHT</text><text x="1815.300" y="217.500" font-size="13" fill="#6464e4" font-family="Liberation Sans, sans-serif">Z</text><text x="1864.300" y="302.500" font-size="13" fill="#f07c7c" font-family="Liberation Sans, sans-serif">X</text></svg>
</body></html>
